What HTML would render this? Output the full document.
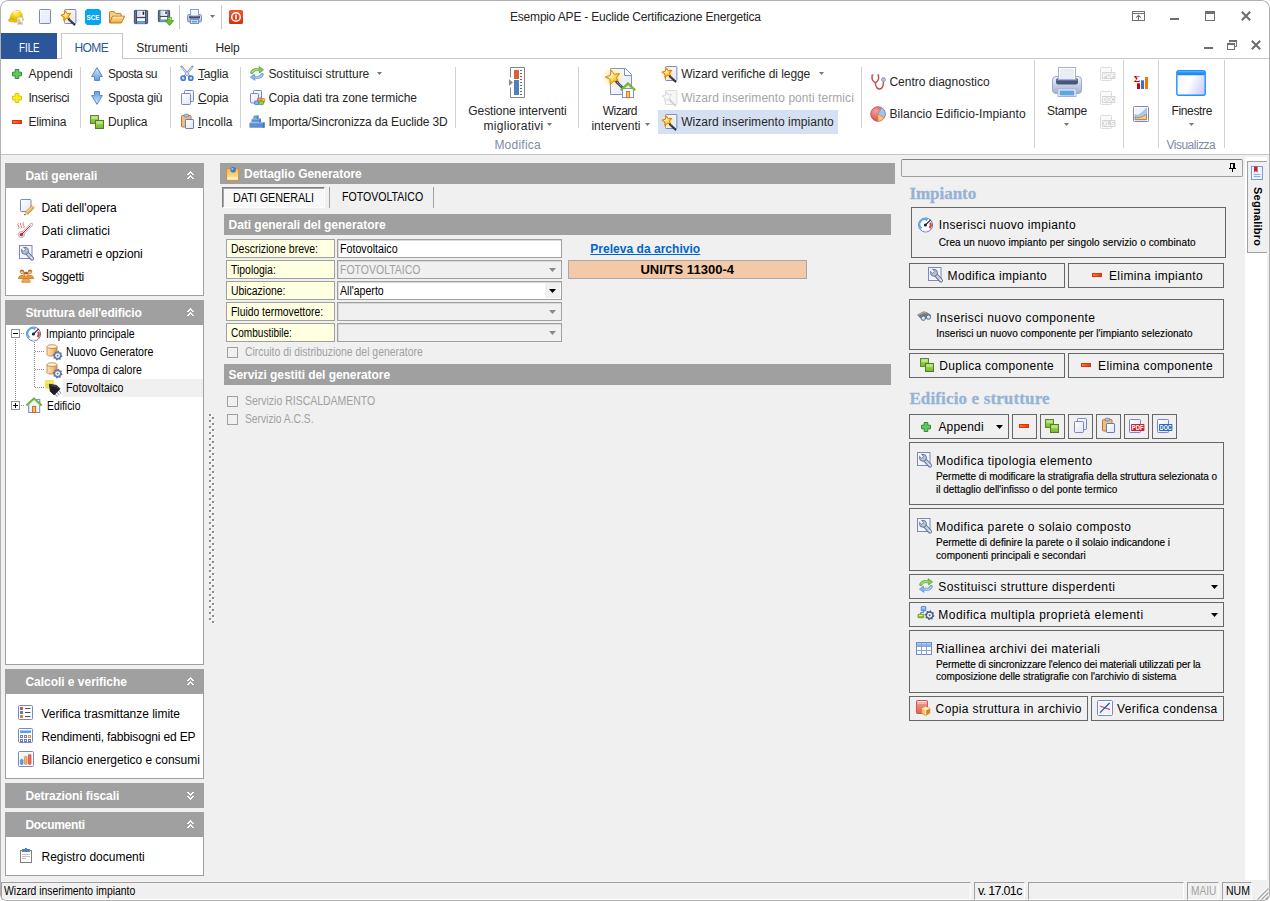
<!DOCTYPE html>
<html lang="it"><head><meta charset="utf-8"><title>Esempio APE - Euclide Certificazione Energetica</title>
<style>
html,body{margin:0;padding:0;}
body{width:1270px;height:901px;overflow:hidden;background:#fff;font-family:'Liberation Sans', sans-serif;font-size:12px;}
#app{position:relative;width:1270px;height:901px;overflow:hidden;background:#fff;border-radius:8px 8px 6px 6px;}
#app div,#app svg{position:absolute;box-sizing:border-box;}
#app svg{overflow:visible;}
.t{white-space:pre;}
u{text-decoration:underline;}
</style></head>
<body><div id="app">
<div style="left:0px;top:0px;width:1270px;height:901px;background:#fff;"></div>
<div style="left:1px;top:155px;width:1268px;height:745px;background:#f0f0f0;"></div>
<div style="left:1px;top:154px;width:1268px;height:1px;background:#c6c6c6;"></div>
<div class="t" style="letter-spacing:-0.199px;left:510px;top:9px;height:16px;line-height:16px;font-size:12px;color:#262626;white-space:pre;">Esempio APE - Euclide Certificazione Energetica</div>
<div style="left:179px;top:5px;width:1px;height:24px;background:#c8c8c8;"></div>
<div style="left:221px;top:5px;width:1px;height:24px;background:#c8c8c8;"></div>
<div style="left:1px;top:33px;width:56px;height:26px;background:#2b579a;"></div>
<div class="t" style="transform-origin:0 50%;transform:scaleX(0.8089);left:18.5px;top:40px;height:16px;line-height:16px;font-size:12px;color:#fff;white-space:pre;">FILE</div>
<div style="left:57px;top:58px;width:1212px;height:1px;background:#c6c6c6;"></div>
<div style="left:61px;top:33px;width:62px;height:26px;background:#fff;border:1px solid #c6c6c6;border-bottom:none;"></div>
<div class="t" style="letter-spacing:-0.600px;left:74.5px;top:40px;height:16px;line-height:16px;font-size:12px;color:#2b579a;white-space:pre;">HOME</div>
<div class="t" style="letter-spacing:0.005px;left:136.2px;top:40px;height:16px;line-height:16px;font-size:12px;color:#262626;white-space:pre;">Strumenti</div>
<div class="t" style="letter-spacing:-0.163px;left:215.4px;top:40px;height:16px;line-height:16px;font-size:12px;color:#262626;white-space:pre;">Help</div>
<div class="t" style="letter-spacing:0.059px;left:28.4px;top:66px;height:16px;line-height:16px;font-size:12px;color:#262626;white-space:pre;">Appendi</div>
<div class="t" style="letter-spacing:-0.364px;left:28.4px;top:90px;height:16px;line-height:16px;font-size:12px;color:#262626;white-space:pre;">Inserisci</div>
<div class="t" style="letter-spacing:-0.210px;left:28.4px;top:114px;height:16px;line-height:16px;font-size:12px;color:#262626;white-space:pre;">Elimina</div>
<div style="left:80px;top:67px;width:1px;height:61px;background:#d2d2d2;"></div>
<div class="t" style="letter-spacing:-0.484px;left:108px;top:66px;height:16px;line-height:16px;font-size:12px;color:#262626;white-space:pre;">Sposta su</div>
<div class="t" style="letter-spacing:-0.247px;left:108px;top:90px;height:16px;line-height:16px;font-size:12px;color:#262626;white-space:pre;">Sposta giù</div>
<div class="t" style="letter-spacing:-0.089px;left:108px;top:114px;height:16px;line-height:16px;font-size:12px;color:#262626;white-space:pre;">Duplica</div>
<div style="left:170px;top:67px;width:1px;height:61px;background:#d2d2d2;"></div>
<div class="t" style="letter-spacing:-0.172px;left:198px;top:66px;height:16px;line-height:16px;font-size:12px;color:#262626;white-space:pre;"><u>T</u>aglia</div>
<div class="t" style="letter-spacing:-0.215px;left:198px;top:90px;height:16px;line-height:16px;font-size:12px;color:#262626;white-space:pre;"><u>C</u>opia</div>
<div class="t" style="letter-spacing:-0.034px;left:198px;top:114px;height:16px;line-height:16px;font-size:12px;color:#262626;white-space:pre;"><u>I</u>ncolla</div>
<div style="left:240px;top:67px;width:1px;height:61px;background:#d2d2d2;"></div>
<div class="t" style="letter-spacing:-0.024px;left:268.4px;top:66px;height:16px;line-height:16px;font-size:12px;color:#262626;white-space:pre;">Sostituisci strutture</div>
<div class="t" style="letter-spacing:-0.055px;left:268.4px;top:90px;height:16px;line-height:16px;font-size:12px;color:#262626;white-space:pre;">Copia dati tra zone termiche</div>
<div class="t" style="letter-spacing:-0.147px;left:268.4px;top:114px;height:16px;line-height:16px;font-size:12px;color:#262626;white-space:pre;">Importa/Sincronizza da Euclide 3D</div>
<div style="left:455px;top:67px;width:1px;height:61px;background:#d2d2d2;"></div>
<div class="t" style="letter-spacing:-0.087px;left:468.3px;top:103px;height:16px;line-height:16px;font-size:12px;color:#262626;white-space:pre;">Gestione interventi</div>
<div class="t" style="letter-spacing:0.265px;left:483.6px;top:118px;height:16px;line-height:16px;font-size:12px;color:#262626;white-space:pre;">migliorativi</div>
<div class="t" style="letter-spacing:0.230px;left:494.4px;top:137px;height:16px;line-height:16px;font-size:12px;color:#808b9f;white-space:pre;">Modifica</div>
<div style="left:578px;top:67px;width:1px;height:61px;background:#d2d2d2;"></div>
<div class="t" style="letter-spacing:-0.509px;left:602.7px;top:103px;height:16px;line-height:16px;font-size:12px;color:#262626;white-space:pre;">Wizard</div>
<div class="t" style="letter-spacing:0.044px;left:591.4px;top:118px;height:16px;line-height:16px;font-size:12px;color:#262626;white-space:pre;">interventi</div>
<div style="left:658px;top:110px;width:180px;height:24px;background:#d5e1f2;"></div>
<div class="t" style="letter-spacing:-0.068px;left:681.2px;top:66px;height:16px;line-height:16px;font-size:12px;color:#262626;white-space:pre;">Wizard verifiche di legge</div>
<div class="t" style="letter-spacing:0.061px;left:681.2px;top:90px;height:16px;line-height:16px;font-size:12px;color:#a6a6a6;white-space:pre;">Wizard inserimento ponti termici</div>
<div class="t" style="letter-spacing:0.043px;left:681.2px;top:114px;height:16px;line-height:16px;font-size:12px;color:#262626;white-space:pre;">Wizard inserimento impianto</div>
<div style="left:861px;top:67px;width:1px;height:61px;background:#d2d2d2;"></div>
<div class="t" style="letter-spacing:0.008px;left:889.4px;top:74px;height:16px;line-height:16px;font-size:12px;color:#262626;white-space:pre;">Centro diagnostico</div>
<div class="t" style="letter-spacing:0.090px;left:889.4px;top:106px;height:16px;line-height:16px;font-size:12px;color:#262626;white-space:pre;">Bilancio Edificio-Impianto</div>
<div style="left:1034px;top:60px;width:1px;height:88px;background:#d2d2d2;"></div>
<div class="t" style="letter-spacing:-0.232px;left:1046.9px;top:103px;height:16px;line-height:16px;font-size:12px;color:#262626;white-space:pre;">Stampe</div>
<div style="left:1123px;top:60px;width:1px;height:88px;background:#d2d2d2;"></div>
<div style="left:1158px;top:60px;width:1px;height:88px;background:#d2d2d2;"></div>
<div class="t" style="letter-spacing:-0.337px;left:1171.4px;top:103px;height:16px;line-height:16px;font-size:12px;color:#262626;white-space:pre;">Finestre</div>
<div class="t" style="letter-spacing:-0.501px;left:1166.5px;top:137px;height:16px;line-height:16px;font-size:12px;color:#808b9f;white-space:pre;">Visualizza</div>
<div style="left:1224px;top:60px;width:1px;height:88px;background:#d2d2d2;"></div>
<svg style="left:377.0px;top:72.0px;" width="5" height="3" viewBox="0 0 5 3"><path d="M0 0H5L2.5 3Z" fill="#777"/></svg>
<svg style="left:547.0px;top:123.0px;" width="5" height="3" viewBox="0 0 5 3"><path d="M0 0H5L2.5 3Z" fill="#777"/></svg>
<svg style="left:645.0px;top:123.0px;" width="5" height="3" viewBox="0 0 5 3"><path d="M0 0H5L2.5 3Z" fill="#777"/></svg>
<svg style="left:818.5px;top:72.0px;" width="5" height="3" viewBox="0 0 5 3"><path d="M0 0H5L2.5 3Z" fill="#777"/></svg>
<svg style="left:1064.0px;top:123.0px;" width="5" height="3" viewBox="0 0 5 3"><path d="M0 0H5L2.5 3Z" fill="#777"/></svg>
<svg style="left:1189.0px;top:123.0px;" width="5" height="3" viewBox="0 0 5 3"><path d="M0 0H5L2.5 3Z" fill="#777"/></svg>
<svg style="left:210.0px;top:15.0px;" width="5" height="3" viewBox="0 0 5 3"><path d="M0 0H5L2.5 3Z" fill="#777"/></svg>
<div style="left:5px;top:163px;width:199px;height:25px;background:#a0a0a0;"></div>
<div class="t" style="letter-spacing:-0.011px;left:25.4px;top:168px;height:16px;line-height:16px;font-size:12px;color:#fff;white-space:pre;font-weight:700;">Dati generali</div>
<svg style="left:187px;top:171px;shape-rendering:crispEdges;" width="7" height="8" viewBox="0 0 7 8"><rect x="3" y="0" width="1" height="1" fill="#fff"/><rect x="2" y="1" width="3" height="1" fill="#fff"/><rect x="1" y="2" width="2" height="1" fill="#fff"/><rect x="4" y="2" width="2" height="1" fill="#fff"/><rect x="0" y="3" width="2" height="1" fill="#fff"/><rect x="5" y="3" width="2" height="1" fill="#fff"/><rect x="3" y="4" width="1" height="1" fill="#fff"/><rect x="2" y="5" width="3" height="1" fill="#fff"/><rect x="1" y="6" width="2" height="1" fill="#fff"/><rect x="4" y="6" width="2" height="1" fill="#fff"/><rect x="0" y="7" width="2" height="1" fill="#fff"/><rect x="5" y="7" width="2" height="1" fill="#fff"/></svg>
<div style="left:5px;top:188px;width:199px;height:108px;background:#fff;border:1px solid #a0a0a0;border-top:none;"></div>
<div style="left:5px;top:300px;width:199px;height:25px;background:#a0a0a0;"></div>
<div class="t" style="letter-spacing:-0.138px;left:25.4px;top:305px;height:16px;line-height:16px;font-size:12px;color:#fff;white-space:pre;font-weight:700;">Struttura dell'edificio</div>
<svg style="left:187px;top:308px;shape-rendering:crispEdges;" width="7" height="8" viewBox="0 0 7 8"><rect x="3" y="0" width="1" height="1" fill="#fff"/><rect x="2" y="1" width="3" height="1" fill="#fff"/><rect x="1" y="2" width="2" height="1" fill="#fff"/><rect x="4" y="2" width="2" height="1" fill="#fff"/><rect x="0" y="3" width="2" height="1" fill="#fff"/><rect x="5" y="3" width="2" height="1" fill="#fff"/><rect x="3" y="4" width="1" height="1" fill="#fff"/><rect x="2" y="5" width="3" height="1" fill="#fff"/><rect x="1" y="6" width="2" height="1" fill="#fff"/><rect x="4" y="6" width="2" height="1" fill="#fff"/><rect x="0" y="7" width="2" height="1" fill="#fff"/><rect x="5" y="7" width="2" height="1" fill="#fff"/></svg>
<div style="left:5px;top:325px;width:199px;height:340px;background:#fff;border:1px solid #a0a0a0;border-top:none;"></div>
<div style="left:5px;top:669px;width:199px;height:25px;background:#a0a0a0;"></div>
<div class="t" style="letter-spacing:-0.025px;left:25.4px;top:674px;height:16px;line-height:16px;font-size:12px;color:#fff;white-space:pre;font-weight:700;">Calcoli e verifiche</div>
<svg style="left:187px;top:677px;shape-rendering:crispEdges;" width="7" height="8" viewBox="0 0 7 8"><rect x="3" y="0" width="1" height="1" fill="#fff"/><rect x="2" y="1" width="3" height="1" fill="#fff"/><rect x="1" y="2" width="2" height="1" fill="#fff"/><rect x="4" y="2" width="2" height="1" fill="#fff"/><rect x="0" y="3" width="2" height="1" fill="#fff"/><rect x="5" y="3" width="2" height="1" fill="#fff"/><rect x="3" y="4" width="1" height="1" fill="#fff"/><rect x="2" y="5" width="3" height="1" fill="#fff"/><rect x="1" y="6" width="2" height="1" fill="#fff"/><rect x="4" y="6" width="2" height="1" fill="#fff"/><rect x="0" y="7" width="2" height="1" fill="#fff"/><rect x="5" y="7" width="2" height="1" fill="#fff"/></svg>
<div style="left:5px;top:694px;width:199px;height:85px;background:#fff;border:1px solid #a0a0a0;border-top:none;"></div>
<div style="left:5px;top:783px;width:199px;height:25px;background:#a0a0a0;"></div>
<div class="t" style="letter-spacing:-0.087px;left:25.4px;top:788px;height:16px;line-height:16px;font-size:12px;color:#fff;white-space:pre;font-weight:700;">Detrazioni fiscali</div>
<svg style="left:187px;top:792px;shape-rendering:crispEdges;" width="7" height="8" viewBox="0 0 7 8"><rect x="3" y="3" width="1" height="1" fill="#fff"/><rect x="2" y="2" width="3" height="1" fill="#fff"/><rect x="1" y="1" width="2" height="1" fill="#fff"/><rect x="4" y="1" width="2" height="1" fill="#fff"/><rect x="0" y="0" width="2" height="1" fill="#fff"/><rect x="5" y="0" width="2" height="1" fill="#fff"/><rect x="3" y="7" width="1" height="1" fill="#fff"/><rect x="2" y="6" width="3" height="1" fill="#fff"/><rect x="1" y="5" width="2" height="1" fill="#fff"/><rect x="4" y="5" width="2" height="1" fill="#fff"/><rect x="0" y="4" width="2" height="1" fill="#fff"/><rect x="5" y="4" width="2" height="1" fill="#fff"/></svg>
<div style="left:5px;top:812px;width:199px;height:25px;background:#a0a0a0;"></div>
<div class="t" style="letter-spacing:-0.302px;left:25.4px;top:817px;height:16px;line-height:16px;font-size:12px;color:#fff;white-space:pre;font-weight:700;">Documenti</div>
<svg style="left:187px;top:820px;shape-rendering:crispEdges;" width="7" height="8" viewBox="0 0 7 8"><rect x="3" y="0" width="1" height="1" fill="#fff"/><rect x="2" y="1" width="3" height="1" fill="#fff"/><rect x="1" y="2" width="2" height="1" fill="#fff"/><rect x="4" y="2" width="2" height="1" fill="#fff"/><rect x="0" y="3" width="2" height="1" fill="#fff"/><rect x="5" y="3" width="2" height="1" fill="#fff"/><rect x="3" y="4" width="1" height="1" fill="#fff"/><rect x="2" y="5" width="3" height="1" fill="#fff"/><rect x="1" y="6" width="2" height="1" fill="#fff"/><rect x="4" y="6" width="2" height="1" fill="#fff"/><rect x="0" y="7" width="2" height="1" fill="#fff"/><rect x="5" y="7" width="2" height="1" fill="#fff"/></svg>
<div style="left:5px;top:837px;width:199px;height:39px;background:#fff;border:1px solid #a0a0a0;border-top:none;"></div>
<div class="t" style="letter-spacing:-0.075px;left:41.5px;top:200px;height:16px;line-height:16px;font-size:12px;color:#000;white-space:pre;">Dati dell'opera</div>
<div class="t" style="letter-spacing:0.089px;left:41.5px;top:223px;height:16px;line-height:16px;font-size:12px;color:#000;white-space:pre;">Dati climatici</div>
<div class="t" style="letter-spacing:-0.122px;left:41.5px;top:246px;height:16px;line-height:16px;font-size:12px;color:#000;white-space:pre;">Parametri e opzioni</div>
<div class="t" style="letter-spacing:-0.178px;left:41.5px;top:269px;height:16px;line-height:16px;font-size:12px;color:#000;white-space:pre;">Soggetti</div>
<div class="t" style="letter-spacing:-0.033px;left:41.5px;top:706px;height:16px;line-height:16px;font-size:12px;color:#000;white-space:pre;">Verifica trasmittanze limite</div>
<div class="t" style="letter-spacing:-0.152px;left:41.5px;top:729px;height:16px;line-height:16px;font-size:12px;color:#000;white-space:pre;">Rendimenti, fabbisogni ed EP</div>
<div class="t" style="letter-spacing:-0.040px;left:41.5px;top:752px;height:16px;line-height:16px;font-size:12px;color:#000;white-space:pre;">Bilancio energetico e consumi</div>
<div class="t" style="letter-spacing:-0.011px;left:41.5px;top:849px;height:16px;line-height:16px;font-size:12px;color:#000;white-space:pre;">Registro documenti</div>
<div style="left:63px;top:379px;width:140px;height:18px;background:#f0f0f0;"></div>
<div class="t" style="transform-origin:0 50%;transform:scaleX(0.8444);left:46px;top:326px;height:16.5px;line-height:16.5px;font-size:12.5px;color:#000;white-space:pre;">Impianto principale</div>
<div class="t" style="transform-origin:0 50%;transform:scaleX(0.8508);left:65.7px;top:344px;height:16.5px;line-height:16.5px;font-size:12.5px;color:#000;white-space:pre;">Nuovo Generatore</div>
<div class="t" style="transform-origin:0 50%;transform:scaleX(0.8381);left:65.7px;top:362px;height:16.5px;line-height:16.5px;font-size:12.5px;color:#000;white-space:pre;">Pompa di calore</div>
<div class="t" style="transform-origin:0 50%;transform:scaleX(0.8530);left:65.7px;top:380px;height:16.5px;line-height:16.5px;font-size:12.5px;color:#000;white-space:pre;">Fotovoltaico</div>
<div class="t" style="transform-origin:0 50%;transform:scaleX(0.8288);left:46.6px;top:398px;height:16.5px;line-height:16.5px;font-size:12.5px;color:#000;white-space:pre;">Edificio</div>
<svg style="left:0px;top:0px;" width="64" height="420" viewBox="0 0 64 420"><rect x="15" y="339" width="1" height="1" fill="#8a8a8a"/><rect x="15" y="341" width="1" height="1" fill="#8a8a8a"/><rect x="15" y="343" width="1" height="1" fill="#8a8a8a"/><rect x="15" y="345" width="1" height="1" fill="#8a8a8a"/><rect x="15" y="347" width="1" height="1" fill="#8a8a8a"/><rect x="15" y="349" width="1" height="1" fill="#8a8a8a"/><rect x="15" y="351" width="1" height="1" fill="#8a8a8a"/><rect x="15" y="353" width="1" height="1" fill="#8a8a8a"/><rect x="15" y="355" width="1" height="1" fill="#8a8a8a"/><rect x="15" y="357" width="1" height="1" fill="#8a8a8a"/><rect x="15" y="359" width="1" height="1" fill="#8a8a8a"/><rect x="15" y="361" width="1" height="1" fill="#8a8a8a"/><rect x="15" y="363" width="1" height="1" fill="#8a8a8a"/><rect x="15" y="365" width="1" height="1" fill="#8a8a8a"/><rect x="15" y="367" width="1" height="1" fill="#8a8a8a"/><rect x="15" y="369" width="1" height="1" fill="#8a8a8a"/><rect x="15" y="371" width="1" height="1" fill="#8a8a8a"/><rect x="15" y="373" width="1" height="1" fill="#8a8a8a"/><rect x="15" y="375" width="1" height="1" fill="#8a8a8a"/><rect x="15" y="377" width="1" height="1" fill="#8a8a8a"/><rect x="15" y="379" width="1" height="1" fill="#8a8a8a"/><rect x="15" y="381" width="1" height="1" fill="#8a8a8a"/><rect x="15" y="383" width="1" height="1" fill="#8a8a8a"/><rect x="15" y="385" width="1" height="1" fill="#8a8a8a"/><rect x="15" y="387" width="1" height="1" fill="#8a8a8a"/><rect x="15" y="389" width="1" height="1" fill="#8a8a8a"/><rect x="15" y="391" width="1" height="1" fill="#8a8a8a"/><rect x="15" y="393" width="1" height="1" fill="#8a8a8a"/><rect x="15" y="395" width="1" height="1" fill="#8a8a8a"/><rect x="15" y="397" width="1" height="1" fill="#8a8a8a"/><rect x="15" y="399" width="1" height="1" fill="#8a8a8a"/><rect x="34" y="342" width="1" height="1" fill="#8a8a8a"/><rect x="34" y="344" width="1" height="1" fill="#8a8a8a"/><rect x="34" y="346" width="1" height="1" fill="#8a8a8a"/><rect x="34" y="348" width="1" height="1" fill="#8a8a8a"/><rect x="34" y="350" width="1" height="1" fill="#8a8a8a"/><rect x="34" y="352" width="1" height="1" fill="#8a8a8a"/><rect x="34" y="354" width="1" height="1" fill="#8a8a8a"/><rect x="34" y="356" width="1" height="1" fill="#8a8a8a"/><rect x="34" y="358" width="1" height="1" fill="#8a8a8a"/><rect x="34" y="360" width="1" height="1" fill="#8a8a8a"/><rect x="34" y="362" width="1" height="1" fill="#8a8a8a"/><rect x="34" y="364" width="1" height="1" fill="#8a8a8a"/><rect x="34" y="366" width="1" height="1" fill="#8a8a8a"/><rect x="34" y="368" width="1" height="1" fill="#8a8a8a"/><rect x="34" y="370" width="1" height="1" fill="#8a8a8a"/><rect x="34" y="372" width="1" height="1" fill="#8a8a8a"/><rect x="34" y="374" width="1" height="1" fill="#8a8a8a"/><rect x="34" y="376" width="1" height="1" fill="#8a8a8a"/><rect x="34" y="378" width="1" height="1" fill="#8a8a8a"/><rect x="34" y="380" width="1" height="1" fill="#8a8a8a"/><rect x="34" y="382" width="1" height="1" fill="#8a8a8a"/><rect x="34" y="384" width="1" height="1" fill="#8a8a8a"/><rect x="34" y="386" width="1" height="1" fill="#8a8a8a"/><rect x="21" y="333" width="1" height="1" fill="#8a8a8a"/><rect x="21" y="405" width="1" height="1" fill="#8a8a8a"/><rect x="23" y="333" width="1" height="1" fill="#8a8a8a"/><rect x="23" y="405" width="1" height="1" fill="#8a8a8a"/><rect x="35" y="351" width="1" height="1" fill="#8a8a8a"/><rect x="37" y="351" width="1" height="1" fill="#8a8a8a"/><rect x="39" y="351" width="1" height="1" fill="#8a8a8a"/><rect x="41" y="351" width="1" height="1" fill="#8a8a8a"/><rect x="43" y="351" width="1" height="1" fill="#8a8a8a"/><rect x="35" y="369" width="1" height="1" fill="#8a8a8a"/><rect x="37" y="369" width="1" height="1" fill="#8a8a8a"/><rect x="39" y="369" width="1" height="1" fill="#8a8a8a"/><rect x="41" y="369" width="1" height="1" fill="#8a8a8a"/><rect x="43" y="369" width="1" height="1" fill="#8a8a8a"/><rect x="35" y="387" width="1" height="1" fill="#8a8a8a"/><rect x="37" y="387" width="1" height="1" fill="#8a8a8a"/><rect x="39" y="387" width="1" height="1" fill="#8a8a8a"/><rect x="41" y="387" width="1" height="1" fill="#8a8a8a"/><rect x="43" y="387" width="1" height="1" fill="#8a8a8a"/></svg>
<div style="left:11px;top:329px;width:9px;height:9px;background:#fff;border:1px solid #919191;"></div>
<div style="left:13px;top:333px;width:5px;height:1px;background:#000;"></div>
<div style="left:11px;top:401px;width:9px;height:9px;background:#fff;border:1px solid #919191;"></div>
<div style="left:13px;top:405px;width:5px;height:1px;background:#000;"></div>
<div style="left:15px;top:403px;width:1px;height:5px;background:#000;"></div>
<svg style="left:209px;top:414px;" width="6" height="212" viewBox="0 0 6 212"><rect x="1" y="1" width="2" height="2" fill="#fff"/><rect x="0" y="0" width="2" height="2" fill="#8c8c8c"/><rect x="4" y="4" width="2" height="2" fill="#fff"/><rect x="3" y="3" width="2" height="2" fill="#8c8c8c"/><rect x="1" y="7" width="2" height="2" fill="#fff"/><rect x="0" y="6" width="2" height="2" fill="#8c8c8c"/><rect x="4" y="10" width="2" height="2" fill="#fff"/><rect x="3" y="9" width="2" height="2" fill="#8c8c8c"/><rect x="1" y="13" width="2" height="2" fill="#fff"/><rect x="0" y="12" width="2" height="2" fill="#8c8c8c"/><rect x="4" y="16" width="2" height="2" fill="#fff"/><rect x="3" y="15" width="2" height="2" fill="#8c8c8c"/><rect x="1" y="19" width="2" height="2" fill="#fff"/><rect x="0" y="18" width="2" height="2" fill="#8c8c8c"/><rect x="4" y="22" width="2" height="2" fill="#fff"/><rect x="3" y="21" width="2" height="2" fill="#8c8c8c"/><rect x="1" y="25" width="2" height="2" fill="#fff"/><rect x="0" y="24" width="2" height="2" fill="#8c8c8c"/><rect x="4" y="28" width="2" height="2" fill="#fff"/><rect x="3" y="27" width="2" height="2" fill="#8c8c8c"/><rect x="1" y="31" width="2" height="2" fill="#fff"/><rect x="0" y="30" width="2" height="2" fill="#8c8c8c"/><rect x="4" y="34" width="2" height="2" fill="#fff"/><rect x="3" y="33" width="2" height="2" fill="#8c8c8c"/><rect x="1" y="37" width="2" height="2" fill="#fff"/><rect x="0" y="36" width="2" height="2" fill="#8c8c8c"/><rect x="4" y="40" width="2" height="2" fill="#fff"/><rect x="3" y="39" width="2" height="2" fill="#8c8c8c"/><rect x="1" y="43" width="2" height="2" fill="#fff"/><rect x="0" y="42" width="2" height="2" fill="#8c8c8c"/><rect x="4" y="46" width="2" height="2" fill="#fff"/><rect x="3" y="45" width="2" height="2" fill="#8c8c8c"/><rect x="1" y="49" width="2" height="2" fill="#fff"/><rect x="0" y="48" width="2" height="2" fill="#8c8c8c"/><rect x="4" y="52" width="2" height="2" fill="#fff"/><rect x="3" y="51" width="2" height="2" fill="#8c8c8c"/><rect x="1" y="55" width="2" height="2" fill="#fff"/><rect x="0" y="54" width="2" height="2" fill="#8c8c8c"/><rect x="4" y="58" width="2" height="2" fill="#fff"/><rect x="3" y="57" width="2" height="2" fill="#8c8c8c"/><rect x="1" y="61" width="2" height="2" fill="#fff"/><rect x="0" y="60" width="2" height="2" fill="#8c8c8c"/><rect x="4" y="64" width="2" height="2" fill="#fff"/><rect x="3" y="63" width="2" height="2" fill="#8c8c8c"/><rect x="1" y="67" width="2" height="2" fill="#fff"/><rect x="0" y="66" width="2" height="2" fill="#8c8c8c"/><rect x="4" y="70" width="2" height="2" fill="#fff"/><rect x="3" y="69" width="2" height="2" fill="#8c8c8c"/><rect x="1" y="73" width="2" height="2" fill="#fff"/><rect x="0" y="72" width="2" height="2" fill="#8c8c8c"/><rect x="4" y="76" width="2" height="2" fill="#fff"/><rect x="3" y="75" width="2" height="2" fill="#8c8c8c"/><rect x="1" y="79" width="2" height="2" fill="#fff"/><rect x="0" y="78" width="2" height="2" fill="#8c8c8c"/><rect x="4" y="82" width="2" height="2" fill="#fff"/><rect x="3" y="81" width="2" height="2" fill="#8c8c8c"/><rect x="1" y="85" width="2" height="2" fill="#fff"/><rect x="0" y="84" width="2" height="2" fill="#8c8c8c"/><rect x="4" y="88" width="2" height="2" fill="#fff"/><rect x="3" y="87" width="2" height="2" fill="#8c8c8c"/><rect x="1" y="91" width="2" height="2" fill="#fff"/><rect x="0" y="90" width="2" height="2" fill="#8c8c8c"/><rect x="4" y="94" width="2" height="2" fill="#fff"/><rect x="3" y="93" width="2" height="2" fill="#8c8c8c"/><rect x="1" y="97" width="2" height="2" fill="#fff"/><rect x="0" y="96" width="2" height="2" fill="#8c8c8c"/><rect x="4" y="100" width="2" height="2" fill="#fff"/><rect x="3" y="99" width="2" height="2" fill="#8c8c8c"/><rect x="1" y="103" width="2" height="2" fill="#fff"/><rect x="0" y="102" width="2" height="2" fill="#8c8c8c"/><rect x="4" y="106" width="2" height="2" fill="#fff"/><rect x="3" y="105" width="2" height="2" fill="#8c8c8c"/><rect x="1" y="109" width="2" height="2" fill="#fff"/><rect x="0" y="108" width="2" height="2" fill="#8c8c8c"/><rect x="4" y="112" width="2" height="2" fill="#fff"/><rect x="3" y="111" width="2" height="2" fill="#8c8c8c"/><rect x="1" y="115" width="2" height="2" fill="#fff"/><rect x="0" y="114" width="2" height="2" fill="#8c8c8c"/><rect x="4" y="118" width="2" height="2" fill="#fff"/><rect x="3" y="117" width="2" height="2" fill="#8c8c8c"/><rect x="1" y="121" width="2" height="2" fill="#fff"/><rect x="0" y="120" width="2" height="2" fill="#8c8c8c"/><rect x="4" y="124" width="2" height="2" fill="#fff"/><rect x="3" y="123" width="2" height="2" fill="#8c8c8c"/><rect x="1" y="127" width="2" height="2" fill="#fff"/><rect x="0" y="126" width="2" height="2" fill="#8c8c8c"/><rect x="4" y="130" width="2" height="2" fill="#fff"/><rect x="3" y="129" width="2" height="2" fill="#8c8c8c"/><rect x="1" y="133" width="2" height="2" fill="#fff"/><rect x="0" y="132" width="2" height="2" fill="#8c8c8c"/><rect x="4" y="136" width="2" height="2" fill="#fff"/><rect x="3" y="135" width="2" height="2" fill="#8c8c8c"/><rect x="1" y="139" width="2" height="2" fill="#fff"/><rect x="0" y="138" width="2" height="2" fill="#8c8c8c"/><rect x="4" y="142" width="2" height="2" fill="#fff"/><rect x="3" y="141" width="2" height="2" fill="#8c8c8c"/><rect x="1" y="145" width="2" height="2" fill="#fff"/><rect x="0" y="144" width="2" height="2" fill="#8c8c8c"/><rect x="4" y="148" width="2" height="2" fill="#fff"/><rect x="3" y="147" width="2" height="2" fill="#8c8c8c"/><rect x="1" y="151" width="2" height="2" fill="#fff"/><rect x="0" y="150" width="2" height="2" fill="#8c8c8c"/><rect x="4" y="154" width="2" height="2" fill="#fff"/><rect x="3" y="153" width="2" height="2" fill="#8c8c8c"/><rect x="1" y="157" width="2" height="2" fill="#fff"/><rect x="0" y="156" width="2" height="2" fill="#8c8c8c"/><rect x="4" y="160" width="2" height="2" fill="#fff"/><rect x="3" y="159" width="2" height="2" fill="#8c8c8c"/><rect x="1" y="163" width="2" height="2" fill="#fff"/><rect x="0" y="162" width="2" height="2" fill="#8c8c8c"/><rect x="4" y="166" width="2" height="2" fill="#fff"/><rect x="3" y="165" width="2" height="2" fill="#8c8c8c"/><rect x="1" y="169" width="2" height="2" fill="#fff"/><rect x="0" y="168" width="2" height="2" fill="#8c8c8c"/><rect x="4" y="172" width="2" height="2" fill="#fff"/><rect x="3" y="171" width="2" height="2" fill="#8c8c8c"/><rect x="1" y="175" width="2" height="2" fill="#fff"/><rect x="0" y="174" width="2" height="2" fill="#8c8c8c"/><rect x="4" y="178" width="2" height="2" fill="#fff"/><rect x="3" y="177" width="2" height="2" fill="#8c8c8c"/><rect x="1" y="181" width="2" height="2" fill="#fff"/><rect x="0" y="180" width="2" height="2" fill="#8c8c8c"/><rect x="4" y="184" width="2" height="2" fill="#fff"/><rect x="3" y="183" width="2" height="2" fill="#8c8c8c"/><rect x="1" y="187" width="2" height="2" fill="#fff"/><rect x="0" y="186" width="2" height="2" fill="#8c8c8c"/><rect x="4" y="190" width="2" height="2" fill="#fff"/><rect x="3" y="189" width="2" height="2" fill="#8c8c8c"/><rect x="1" y="193" width="2" height="2" fill="#fff"/><rect x="0" y="192" width="2" height="2" fill="#8c8c8c"/><rect x="4" y="196" width="2" height="2" fill="#fff"/><rect x="3" y="195" width="2" height="2" fill="#8c8c8c"/><rect x="1" y="199" width="2" height="2" fill="#fff"/><rect x="0" y="198" width="2" height="2" fill="#8c8c8c"/><rect x="4" y="202" width="2" height="2" fill="#fff"/><rect x="3" y="201" width="2" height="2" fill="#8c8c8c"/><rect x="1" y="205" width="2" height="2" fill="#fff"/><rect x="0" y="204" width="2" height="2" fill="#8c8c8c"/><rect x="4" y="208" width="2" height="2" fill="#fff"/><rect x="3" y="207" width="2" height="2" fill="#8c8c8c"/></svg>
<div style="left:220px;top:163px;width:675px;height:21px;background:#a0a0a0;"></div>
<div class="t" style="letter-spacing:-0.058px;left:244.1px;top:166px;height:16px;line-height:16px;font-size:12px;color:#fff;white-space:pre;font-weight:700;">Dettaglio Generatore</div>
<div style="left:222px;top:187px;width:103px;height:21px;background:#f8f8f8;border:1px solid #808080;border-right-color:#fff;border-bottom-color:#fff;box-shadow:inset 1px 1px 0 #a4a4a4;"></div>
<div class="t" style="transform-origin:0 50%;transform:scaleX(0.8606);left:232.5px;top:190px;height:16.5px;line-height:16.5px;font-size:12.5px;color:#000;white-space:pre;">DATI GENERALI</div>
<div style="left:329px;top:187px;width:1px;height:21px;background:#a0a0a0;"></div>
<div class="t" style="transform-origin:0 50%;transform:scaleX(0.8462);left:341.6px;top:189px;height:16.5px;line-height:16.5px;font-size:12.5px;color:#000;white-space:pre;">FOTOVOLTAICO</div>
<div style="left:433px;top:187px;width:1px;height:21px;background:#a0a0a0;"></div>
<div style="left:224px;top:214px;width:667px;height:21px;background:#a0a0a0;"></div>
<div class="t" style="letter-spacing:-0.028px;left:228.5px;top:217px;height:16px;line-height:16px;font-size:12px;color:#fff;white-space:pre;font-weight:700;">Dati generali del generatore</div>
<div style="left:224px;top:364px;width:667px;height:21px;background:#a0a0a0;"></div>
<div class="t" style="letter-spacing:-0.062px;left:228.5px;top:367px;height:16px;line-height:16px;font-size:12px;color:#fff;white-space:pre;font-weight:700;">Servizi gestiti del generatore</div>
<div style="left:226px;top:239px;width:109px;height:19px;background:#ffffe1;border:1px solid #a0a0a0;"></div>
<div class="t" style="transform-origin:0 50%;transform:scaleX(0.8404);left:230.6px;top:241px;height:16.5px;line-height:16.5px;font-size:12.5px;color:#000;white-space:pre;">Descrizione breve:</div>
<div style="left:337px;top:239px;width:225px;height:19px;background:#fff;border:1px solid #a0a0a0;box-shadow:inset 1px 1px 0 #d9d9d9;"></div>
<div style="left:226px;top:260px;width:109px;height:19px;background:#ffffe1;border:1px solid #a0a0a0;"></div>
<div class="t" style="transform-origin:0 50%;transform:scaleX(0.8335);left:230.6px;top:262px;height:16.5px;line-height:16.5px;font-size:12.5px;color:#000;white-space:pre;">Tipologia:</div>
<div style="left:337px;top:260px;width:225px;height:19px;background:#f0f0f0;border:1px solid #a0a0a0;box-shadow:inset 1px 1px 0 #d9d9d9;"></div>
<svg style="left:549.0px;top:268.0px;" width="7" height="4" viewBox="0 0 7 4"><path d="M0 0H7L3.5 4Z" fill="#8a8a8a"/></svg>
<div style="left:226px;top:281px;width:109px;height:19px;background:#ffffe1;border:1px solid #a0a0a0;"></div>
<div class="t" style="transform-origin:0 50%;transform:scaleX(0.8327);left:230.6px;top:283px;height:16.5px;line-height:16.5px;font-size:12.5px;color:#000;white-space:pre;">Ubicazione:</div>
<div style="left:337px;top:281px;width:225px;height:19px;background:#fff;border:1px solid #a0a0a0;box-shadow:inset 1px 1px 0 #d9d9d9;"></div>
<div style="left:545px;top:283px;width:15px;height:15px;background:#f0f0f0;"></div>
<svg style="left:549.0px;top:289.0px;" width="7" height="4" viewBox="0 0 7 4"><path d="M0 0H7L3.5 4Z" fill="#000"/></svg>
<div style="left:226px;top:302px;width:109px;height:19px;background:#ffffe1;border:1px solid #a0a0a0;"></div>
<div class="t" style="transform-origin:0 50%;transform:scaleX(0.8284);left:230.6px;top:304px;height:16.5px;line-height:16.5px;font-size:12.5px;color:#000;white-space:pre;">Fluido termovettore:</div>
<div style="left:337px;top:302px;width:225px;height:19px;background:#f0f0f0;border:1px solid #a0a0a0;box-shadow:inset 1px 1px 0 #d9d9d9;"></div>
<svg style="left:549.0px;top:310.0px;" width="7" height="4" viewBox="0 0 7 4"><path d="M0 0H7L3.5 4Z" fill="#8a8a8a"/></svg>
<div style="left:226px;top:323px;width:109px;height:19px;background:#ffffe1;border:1px solid #a0a0a0;"></div>
<div class="t" style="transform-origin:0 50%;transform:scaleX(0.8041);left:230.6px;top:325px;height:16.5px;line-height:16.5px;font-size:12.5px;color:#000;white-space:pre;">Combustibile:</div>
<div style="left:337px;top:323px;width:225px;height:19px;background:#f0f0f0;border:1px solid #a0a0a0;box-shadow:inset 1px 1px 0 #d9d9d9;"></div>
<svg style="left:549.0px;top:331.0px;" width="7" height="4" viewBox="0 0 7 4"><path d="M0 0H7L3.5 4Z" fill="#8a8a8a"/></svg>
<div class="t" style="transform-origin:0 50%;transform:scaleX(0.8545);left:339.7px;top:241px;height:16.5px;line-height:16.5px;font-size:12.5px;color:#000;white-space:pre;">Fotovoltaico</div>
<div class="t" style="transform-origin:0 50%;transform:scaleX(0.8399);left:339.7px;top:262px;height:16.5px;line-height:16.5px;font-size:12.5px;color:#a0a0a0;white-space:pre;">FOTOVOLTAICO</div>
<div class="t" style="transform-origin:0 50%;transform:scaleX(0.8447);left:339.7px;top:283px;height:16.5px;line-height:16.5px;font-size:12.5px;color:#000;white-space:pre;">All'aperto</div>
<div class="t" style="letter-spacing:0.027px;left:590.3px;top:241px;height:16px;line-height:16px;font-size:12px;color:#0066cc;white-space:pre;font-weight:700;text-decoration:underline;">Preleva da archivio</div>
<div style="left:568px;top:260px;width:239px;height:19px;background:#f4c9a8;border:1px solid #a8a8a8;"></div>
<div class="t" style="letter-spacing:0.037px;left:640.4px;top:261px;height:17px;line-height:17px;font-size:13px;color:#000;white-space:pre;font-weight:700;">UNI/TS 11300-4</div>
<div style="left:227px;top:347px;width:11px;height:11px;background:#f0f0f0;border:1px solid #a0a0a0;"></div>
<div class="t" style="transform-origin:0 50%;transform:scaleX(0.8331);left:244.8px;top:344px;height:16.5px;line-height:16.5px;font-size:12.5px;color:#a0a0a0;white-space:pre;">Circuito di distribuzione del generatore</div>
<div style="left:227px;top:396px;width:11px;height:11px;background:#f0f0f0;border:1px solid #a0a0a0;"></div>
<div class="t" style="transform-origin:0 50%;transform:scaleX(0.8381);left:244.8px;top:393px;height:16.5px;line-height:16.5px;font-size:12.5px;color:#a0a0a0;white-space:pre;">Servizio RISCALDAMENTO</div>
<div style="left:227px;top:414px;width:11px;height:11px;background:#f0f0f0;border:1px solid #a0a0a0;"></div>
<div class="t" style="transform-origin:0 50%;transform:scaleX(0.8216);left:244.8px;top:411px;height:16.5px;line-height:16.5px;font-size:12.5px;color:#a0a0a0;white-space:pre;">Servizio A.C.S.</div>
<div style="left:1245px;top:157px;width:22px;height:723px;background:#fff;"></div>
<div style="left:901px;top:159px;width:342px;height:18px;background:#f0f0f0;border:1px solid #a0a0a0;border-top-color:#808080;border-radius:2px;"></div>
<div class="t" style="letter-spacing:-0.040px;left:909.4px;top:183px;height:22px;line-height:22px;font-size:17px;color:#95b3d7;white-space:pre;font-weight:700;font-family:'Liberation Serif', serif;-webkit-text-stroke:0.3px #95b3d7;">Impianto</div>
<div class="t" style="letter-spacing:0.139px;left:909.4px;top:388px;height:22px;line-height:22px;font-size:17px;color:#95b3d7;white-space:pre;font-weight:700;font-family:'Liberation Serif', serif;-webkit-text-stroke:0.3px #95b3d7;">Edificio e strutture</div>
<div style="left:911px;top:207px;width:315px;height:51px;background:#f0f0f0;border:1px solid #666;"></div>
<div class="t" style="letter-spacing:0.359px;left:938.7px;top:217px;height:16px;line-height:16px;font-size:12px;color:#000;white-space:pre;">Inserisci nuovo impianto</div>
<div class="t" style="letter-spacing:0.094px;left:938.7px;top:237px;height:12px;line-height:12px;font-size:10px;color:#000;white-space:pre;-webkit-text-stroke:0.15px #000;">Crea un nuovo impianto per singolo servizio o combinato</div>
<div style="left:909px;top:263px;width:156px;height:25px;background:#f0f0f0;border:1px solid #666;"></div>
<div class="t" style="letter-spacing:0.364px;left:947.6px;top:268px;height:16px;line-height:16px;font-size:12px;color:#000;white-space:pre;">Modifica impianto</div>
<div style="left:1068px;top:263px;width:156px;height:25px;background:#f0f0f0;border:1px solid #666;"></div>
<div class="t" style="letter-spacing:0.370px;left:1109px;top:268px;height:16px;line-height:16px;font-size:12px;color:#000;white-space:pre;">Elimina impianto</div>
<div style="left:909px;top:299px;width:315px;height:51px;background:#f0f0f0;border:1px solid #666;"></div>
<div class="t" style="letter-spacing:0.367px;left:936.3px;top:310px;height:16px;line-height:16px;font-size:12px;color:#000;white-space:pre;">Inserisci nuovo componente</div>
<div class="t" style="letter-spacing:0.047px;left:936.3px;top:328px;height:12px;line-height:12px;font-size:10px;color:#000;white-space:pre;-webkit-text-stroke:0.15px #000;">Inserisci un nuovo componente per l'impianto selezionato</div>
<div style="left:909px;top:353px;width:156px;height:25px;background:#f0f0f0;border:1px solid #666;"></div>
<div class="t" style="letter-spacing:0.300px;left:939.3px;top:358px;height:16px;line-height:16px;font-size:12px;color:#000;white-space:pre;">Duplica componente</div>
<div style="left:1068px;top:353px;width:156px;height:25px;background:#f0f0f0;border:1px solid #666;"></div>
<div class="t" style="letter-spacing:0.345px;left:1098.1px;top:358px;height:16px;line-height:16px;font-size:12px;color:#000;white-space:pre;">Elimina componente</div>
<div style="left:909px;top:414px;width:100px;height:25px;background:#f0f0f0;border:1px solid #666;"></div>
<div class="t" style="letter-spacing:0.192px;left:938.4px;top:419px;height:16px;line-height:16px;font-size:12px;color:#000;white-space:pre;">Appendi</div>
<svg style="left:996.0px;top:425.0px;" width="7" height="4" viewBox="0 0 7 4"><path d="M0 0H7L3.5 4Z" fill="#000"/></svg>
<div style="left:1012px;top:414px;width:25px;height:25px;background:#f0f0f0;border:1px solid #666;"></div>
<div style="left:1040px;top:414px;width:25px;height:25px;background:#f0f0f0;border:1px solid #666;"></div>
<div style="left:1068px;top:414px;width:25px;height:25px;background:#f0f0f0;border:1px solid #666;"></div>
<div style="left:1096px;top:414px;width:25px;height:25px;background:#f0f0f0;border:1px solid #666;"></div>
<div style="left:1124px;top:414px;width:25px;height:25px;background:#f0f0f0;border:1px solid #666;"></div>
<div style="left:1152px;top:414px;width:25px;height:25px;background:#f0f0f0;border:1px solid #666;"></div>
<div style="left:909px;top:442px;width:315px;height:63px;background:#f0f0f0;border:1px solid #666;"></div>
<div class="t" style="letter-spacing:0.411px;left:936px;top:453px;height:16px;line-height:16px;font-size:12px;color:#000;white-space:pre;">Modifica tipologia elemento</div>
<div class="t" style="letter-spacing:-0.062px;left:936px;top:471px;height:12px;line-height:12px;font-size:10px;color:#000;white-space:pre;-webkit-text-stroke:0.15px #000;">Permette di modificare la stratigrafia della struttura selezionata o</div>
<div class="t" style="letter-spacing:-0.002px;left:936px;top:484px;height:12px;line-height:12px;font-size:10px;color:#000;white-space:pre;-webkit-text-stroke:0.15px #000;">il dettaglio dell'infisso o del ponte termico</div>
<div style="left:909px;top:508px;width:315px;height:63px;background:#f0f0f0;border:1px solid #666;"></div>
<div class="t" style="letter-spacing:0.397px;left:936px;top:519px;height:16px;line-height:16px;font-size:12px;color:#000;white-space:pre;">Modifica parete o solaio composto</div>
<div class="t" style="letter-spacing:-0.011px;left:936px;top:537px;height:12px;line-height:12px;font-size:10px;color:#000;white-space:pre;-webkit-text-stroke:0.15px #000;">Permette di definire la parete o il solaio indicandone i</div>
<div class="t" style="letter-spacing:0.043px;left:936px;top:550px;height:12px;line-height:12px;font-size:10px;color:#000;white-space:pre;-webkit-text-stroke:0.15px #000;">componenti principali e secondari</div>
<div style="left:909px;top:574px;width:315px;height:25px;background:#f0f0f0;border:1px solid #666;"></div>
<div class="t" style="letter-spacing:0.409px;left:938.3px;top:579px;height:16px;line-height:16px;font-size:12px;color:#000;white-space:pre;">Sostituisci strutture disperdenti</div>
<svg style="left:1211.0px;top:585.0px;" width="7" height="4" viewBox="0 0 7 4"><path d="M0 0H7L3.5 4Z" fill="#000"/></svg>
<div style="left:909px;top:602px;width:315px;height:25px;background:#f0f0f0;border:1px solid #666;"></div>
<div class="t" style="letter-spacing:0.458px;left:938.3px;top:607px;height:16px;line-height:16px;font-size:12px;color:#000;white-space:pre;">Modifica multipla proprietà elementi</div>
<svg style="left:1211.0px;top:613.0px;" width="7" height="4" viewBox="0 0 7 4"><path d="M0 0H7L3.5 4Z" fill="#000"/></svg>
<div style="left:909px;top:630px;width:315px;height:63px;background:#f0f0f0;border:1px solid #666;"></div>
<div class="t" style="letter-spacing:0.391px;left:936px;top:641px;height:16px;line-height:16px;font-size:12px;color:#000;white-space:pre;">Riallinea archivi dei materiali</div>
<div class="t" style="letter-spacing:-0.113px;left:936px;top:659px;height:12px;line-height:12px;font-size:10px;color:#000;white-space:pre;-webkit-text-stroke:0.15px #000;">Permette di sincronizzare l'elenco dei materiali utilizzati per la</div>
<div class="t" style="letter-spacing:-0.039px;left:936px;top:671px;height:12px;line-height:12px;font-size:10px;color:#000;white-space:pre;-webkit-text-stroke:0.15px #000;">composizione delle stratigrafie con l'archivio di sistema</div>
<div style="left:909px;top:696px;width:179px;height:25px;background:#f0f0f0;border:1px solid #666;"></div>
<div class="t" style="letter-spacing:0.378px;left:935.6px;top:701px;height:16px;line-height:16px;font-size:12px;color:#000;white-space:pre;">Copia struttura in archivio</div>
<div style="left:1091px;top:696px;width:133px;height:25px;background:#f0f0f0;border:1px solid #666;"></div>
<div class="t" style="letter-spacing:0.342px;left:1117.1px;top:701px;height:16px;line-height:16px;font-size:12px;color:#000;white-space:pre;">Verifica condensa</div>
<div style="left:1247px;top:161px;width:20px;height:92px;background:#f0f0f0;border:1px solid #a0a0a0;border-right:none;"></div>
<div style="left:1257.5px;top:187.3px;width:0;height:0;transform:rotate(90deg);transform-origin:0 0;">
<div class="t" style="letter-spacing:0.240px;left:0px;top:-7px;height:15px;line-height:15px;font-size:11px;color:#000;white-space:pre;font-weight:700;">Segnalibro</div>
</div>
<div style="left:1px;top:880px;width:1268px;height:20px;background:#f0f0f0;"></div>
<div style="left:1px;top:882px;width:970px;height:18px;background:#f0f0f0;border-top:1px solid #a0a0a0;border-left:1px solid #a0a0a0;border-right:1px solid #fff;border-bottom:1px solid #fff;"></div>
<div style="left:974px;top:882px;width:51px;height:18px;background:#f0f0f0;border-top:1px solid #a0a0a0;border-left:1px solid #a0a0a0;border-right:1px solid #fff;border-bottom:1px solid #fff;"></div>
<div style="left:1028px;top:882px;width:156px;height:18px;background:#f0f0f0;border-top:1px solid #a0a0a0;border-left:1px solid #a0a0a0;border-right:1px solid #fff;border-bottom:1px solid #fff;"></div>
<div style="left:1187px;top:882px;width:32px;height:18px;background:#f0f0f0;border-top:1px solid #a0a0a0;border-left:1px solid #a0a0a0;border-right:1px solid #fff;border-bottom:1px solid #fff;"></div>
<div style="left:1222px;top:882px;width:30px;height:18px;background:#f0f0f0;border-top:1px solid #a0a0a0;border-left:1px solid #a0a0a0;border-right:1px solid #fff;border-bottom:1px solid #fff;"></div>
<div class="t" style="transform-origin:0 50%;transform:scaleX(0.8326);left:3.7px;top:883px;height:16.5px;line-height:16.5px;font-size:12.5px;color:#000;white-space:pre;">Wizard inserimento impianto</div>
<div class="t" style="letter-spacing:-0.677px;left:978px;top:883px;height:16.5px;line-height:16.5px;font-size:12.5px;color:#000;white-space:pre;">v. 17.01c</div>
<div class="t" style="transform-origin:0 50%;transform:scaleX(0.8096);left:1190.8px;top:883px;height:16.5px;line-height:16.5px;font-size:12.5px;color:#a0a0a0;white-space:pre;">MAIU</div>
<div class="t" style="transform-origin:0 50%;transform:scaleX(0.8395);left:1225.8px;top:883px;height:16.5px;line-height:16.5px;font-size:12.5px;color:#000;white-space:pre;">NUM</div>
<svg style="left:1255px;top:886px;" width="14" height="14" viewBox="0 0 14 14"><path d="M2.5 13.5L13.5 2.5M6.5 13.5L13.5 6.5M10.5 13.5L13.5 10.5" stroke="#fff" stroke-width="1.2" transform="translate(-1,-0.6)"/><path d="M2.5 13.5L13.5 2.5M6.5 13.5L13.5 6.5M10.5 13.5L13.5 10.5" stroke="#a0a0a0" stroke-width="1.1"/></svg>
<svg width="0" height="0" style="left:0;top:0"><defs>
<linearGradient id="gPage" x1="0" y1="0" x2="1" y2="1"><stop offset="0" stop-color="#ffffff"/><stop offset="1" stop-color="#dfe6f5"/></linearGradient>
<linearGradient id="gGreen" x1="0" y1="0" x2="0" y2="1"><stop offset="0" stop-color="#b5dd6a"/><stop offset="1" stop-color="#76b52a"/></linearGradient>
<linearGradient id="gBlueA" x1="0" y1="0" x2="0" y2="1"><stop offset="0" stop-color="#d6e8fa"/><stop offset="1" stop-color="#5f9ddc"/></linearGradient>
<linearGradient id="gRed" x1="0" y1="0" x2="0" y2="1"><stop offset="0" stop-color="#f4562c"/><stop offset="1" stop-color="#d62f0c"/></linearGradient>
<linearGradient id="gMinus" x1="0" y1="0" x2="1" y2="0"><stop offset="0" stop-color="#ff7a3c"/><stop offset="1" stop-color="#e83a08"/></linearGradient>
<linearGradient id="gFolder" x1="0" y1="0" x2="0" y2="1"><stop offset="0" stop-color="#fde3a4"/><stop offset="1" stop-color="#efa83a"/></linearGradient>
<linearGradient id="gPrn" x1="0" y1="0" x2="0" y2="1"><stop offset="0" stop-color="#eef2fa"/><stop offset="1" stop-color="#9fb0d6"/></linearGradient>
<linearGradient id="gWin" x1="0" y1="0.3" x2="1" y2="0.7"><stop offset="0" stop-color="#f4f2ff"/><stop offset="0.45" stop-color="#ffffff"/><stop offset="1" stop-color="#cfcdfb"/></linearGradient>
<linearGradient id="gCyl" x1="0" y1="0" x2="1" y2="0"><stop offset="0" stop-color="#fbe6c2"/><stop offset="0.6" stop-color="#f3bf78"/><stop offset="1" stop-color="#dc9040"/></linearGradient>
<linearGradient id="gNote" x1="0" y1="0" x2="0" y2="1"><stop offset="0" stop-color="#f6b845"/><stop offset="1" stop-color="#fde9a6"/></linearGradient>
<radialGradient id="gStar" cx="0.4" cy="0.35" r="0.7"><stop offset="0" stop-color="#fffbe0"/><stop offset="0.5" stop-color="#fbd240"/><stop offset="1" stop-color="#f2a51c"/></radialGradient>
<radialGradient id="gGlow" cx="0.5" cy="0.5" r="0.5"><stop offset="0" stop-color="#ffe066" stop-opacity="0.9"/><stop offset="1" stop-color="#ffe066" stop-opacity="0"/></radialGradient>
<radialGradient id="gPie" cx="0.35" cy="0.3" r="0.8"><stop offset="0" stop-color="#f4a09a"/><stop offset="1" stop-color="#d0444a"/></radialGradient>
<radialGradient id="gHelm" cx="0.45" cy="0.3" r="0.8"><stop offset="0" stop-color="#fff27a"/><stop offset="0.5" stop-color="#f9d40a"/><stop offset="1" stop-color="#d9a400"/></radialGradient>
<linearGradient id="gPinkBox" x1="0" y1="0" x2="0" y2="1"><stop offset="0" stop-color="#f3a396"/><stop offset="1" stop-color="#e06058"/></linearGradient>
</defs></svg>
<svg style="left:8px;top:10px;" width="16" height="15" viewBox="0 0 16 15"><path d="M2.2 9.4C2 3.8 5.6 0.6 9 0.6C12.6 0.6 15 4 14.8 9.2Z" fill="url(#gHelm)" stroke="#d6a30a" stroke-width="0.5"/><path d="M0.4 10.2C1 8.6 2.4 8.6 4 9.2C7.6 10.6 11.6 10.2 15.4 8.8C16 10 15.2 11 13 11.4C9 12.4 4 12.4 0.8 11.2Z" fill="#f2c40c" stroke="#c99700" stroke-width="0.5"/><path d="M5.6 2.6C7 1.4 9 1.2 10.6 1.8" stroke="#fff8b0" stroke-width="1.1" fill="none" stroke-linecap="round"/><rect x="9.3" y="7.3" width="5.4" height="7.2" fill="#fff" stroke="#b9c6e2" stroke-width="0.6"/><path d="M10.2 9.2H11.4" stroke="#3ea43a" stroke-width="0.9"/><path d="M10.2 10.5H12.2" stroke="#b7cf2a" stroke-width="0.9"/><path d="M10.2 11.8H13" stroke="#f2a81c" stroke-width="0.9"/><path d="M10.2 13.1H13.8" stroke="#e23a2a" stroke-width="0.9"/></svg>
<svg style="left:39px;top:9px;" width="12" height="15" viewBox="0 0 12 15"><rect x="0.5" y="0.5" width="11" height="14" rx="0.8" fill="url(#gPage)" stroke="#7b86c2"/><rect x="2" y="2" width="8" height="11" fill="#e9eef9" opacity="0.7"/></svg>
<svg style="left:60px;top:9px;" width="17" height="17" viewBox="0 0 17 17"><rect x="4.5" y="0.5" width="11.4" height="14" rx="0.8" fill="url(#gPage)" stroke="#7b86c2"/><circle cx="6.4" cy="7" r="7.4" fill="url(#gGlow)"/><path d="M5.20 1.78L7.15 4.74L10.69 4.46L8.48 7.23L9.84 10.51L6.52 9.26L3.82 11.57L3.98 8.03L0.95 6.18L4.37 5.23Z" fill="url(#gStar)" stroke="#dd7514" stroke-width="1" stroke-linejoin="round"/><path d="M9 10.4L14.4 15.6" stroke="#22262e" stroke-width="2.1" stroke-linecap="round"/><path d="M9.2 10.6L14.2 15.4" stroke="#b4bccc" stroke-width="0.7" stroke-dasharray="0.8 0.9"/></svg>
<svg style="left:85px;top:9px;" width="16" height="16" viewBox="0 0 16 16"><path d="M2 0H14L16 2V14L14 16H2L0 14V2Z" fill="#05a6f0"/><text x="8" y="11" font-family="Liberation Sans, sans-serif" font-size="8" font-weight="700" fill="#fff" text-anchor="middle" textLength="13" lengthAdjust="spacingAndGlyphs">SCE</text></svg>
<svg style="left:109px;top:10.5px;" width="16" height="13" viewBox="0 0 16 13"><path d="M0.5 11.8V1.6Q0.5 0.6 1.5 0.6H5.2L6.6 2.4H11.4Q12.2 2.4 12.2 3.4V5.2" fill="#f6cf85" stroke="#c17a22" stroke-linejoin="round"/><path d="M0.6 12L3.4 5.2H15.6L12.4 12Z" fill="url(#gFolder)" stroke="#c17a22" stroke-linejoin="round"/><path d="M4 6.2H14" stroke="#fff2cf" stroke-width="0.8"/></svg>
<svg style="left:134px;top:10px;" width="14" height="14" viewBox="0 0 14 14"><g transform="scale(1.0)"><rect x="0.3" y="0.3" width="13.4" height="13.4" rx="1" fill="#3c4864" stroke="#2a3348" stroke-width="0.6"/><rect x="1.1" y="0.8" width="1" height="12.4" fill="#6e7c9c"/><rect x="11.9" y="0.8" width="1" height="12.4" fill="#6e7c9c"/><rect x="3" y="0.8" width="8" height="6" fill="#f3f5fa"/><rect x="3" y="0.8" width="3.6" height="6" fill="#d7deee"/><rect x="8.6" y="1.6" width="1.6" height="3.2" fill="#1f2638"/><rect x="3" y="8.2" width="8" height="5.4" fill="#fff"/><rect x="3" y="11" width="8" height="1.8" fill="#5b9ddd"/><rect x="3" y="12.8" width="8" height="0.8" fill="#2f6fc0"/></g></svg>
<svg style="left:158px;top:10px;" width="12" height="12" viewBox="0 0 12 12"><g transform="scale(0.8571428571428571)"><rect x="0.3" y="0.3" width="13.4" height="13.4" rx="1" fill="#3c4864" stroke="#2a3348" stroke-width="0.6"/><rect x="1.1" y="0.8" width="1" height="12.4" fill="#6e7c9c"/><rect x="11.9" y="0.8" width="1" height="12.4" fill="#6e7c9c"/><rect x="3" y="0.8" width="8" height="6" fill="#f3f5fa"/><rect x="3" y="0.8" width="3.6" height="6" fill="#d7deee"/><rect x="8.6" y="1.6" width="1.6" height="3.2" fill="#1f2638"/><rect x="3" y="8.2" width="8" height="5.4" fill="#fff"/><rect x="3" y="11" width="8" height="1.8" fill="#5b9ddd"/><rect x="3" y="12.8" width="8" height="0.8" fill="#2f6fc0"/></g></svg>
<svg style="left:164.5px;top:16.5px;" width="9" height="9" viewBox="0 0 9 9"><path d="M2.6 0.4H6.4V3.6H8.7L4.5 8.6L0.3 3.6H2.6Z" fill="#6cbf2c" stroke="#3f8f12" stroke-width="0.7" stroke-linejoin="round"/><path d="M3.3 1.2H5.7V3" stroke="#c4ee8e" stroke-width="0.8" fill="none"/></svg>
<svg style="left:187px;top:9px;" width="15" height="15" viewBox="0 0 15 15"><rect x="0.5" y="5.5" width="14" height="7.5" rx="1.6" fill="url(#gPrn)" stroke="#7b8cc2"/><rect x="2" y="6.4" width="11" height="3" rx="1" fill="#3d4a70"/><rect x="3.5" y="0.5" width="8" height="6.5" fill="#f1f4fb" stroke="#8f9dcc"/><rect x="3.5" y="10.5" width="8" height="4" fill="#fff" stroke="#7b8cc2"/><rect x="4.6" y="11.6" width="5.8" height="2" fill="#5ea3e2"/></svg>
<svg style="left:229px;top:10px;" width="14" height="14" viewBox="0 0 14 14"><rect x="0" y="0" width="14" height="14" rx="1.6" fill="url(#gRed)"/><circle cx="7" cy="7" r="4.3" fill="none" stroke="#fff" stroke-width="1.5"/><rect x="6.2" y="4.6" width="1.6" height="4.8" fill="#fff"/></svg>
<svg style="left:12px;top:69px;" width="10" height="10" viewBox="0 0 10 10"><path d="M3.2 0.5H6.8V3.2H9.5V6.8H6.8V9.5H3.2V6.8H0.5V3.2H3.2Z" fill="#62c662" stroke="#2f8f2f"/></svg>
<svg style="left:12px;top:93px;" width="10" height="10" viewBox="0 0 10 10"><path d="M3.2 0.5H6.8V3.2H9.5V6.8H6.8V9.5H3.2V6.8H0.5V3.2H3.2Z" fill="#f6ee1e" stroke="#d9c800"/></svg>
<svg style="left:12px;top:120px;" width="10" height="4" viewBox="0 0 10 4"><rect x="0.5" y="0.5" width="9" height="3" fill="url(#gMinus)" stroke="#e03408"/></svg>
<svg style="left:91px;top:67px;" width="12" height="14" viewBox="0 0 12 14"><path d="M6 0.6L11.4 9.5H8.5V13.5H3.5V9.5H0.6Z" fill="url(#gBlueA)" stroke="#5a8acb" stroke-linejoin="round"/></svg>
<svg style="left:91px;top:91px;" width="12" height="14" viewBox="0 0 12 14"><path transform="translate(0,14) scale(1,-1)" d="M6 0.6L11.4 9.5H8.5V13.5H3.5V9.5H0.6Z" fill="url(#gBlueA)" stroke="#5a8acb" stroke-linejoin="round"/></svg>
<svg style="left:90px;top:115px;" width="14" height="14" viewBox="0 0 14 14"><rect x="0.5" y="0.5" width="8" height="8" fill="url(#gGreen)" stroke="#5a8a24"/><rect x="5.5" y="5.5" width="8" height="8" fill="url(#gGreen)" stroke="#4f7f1f"/><rect x="1.5" y="1.5" width="6" height="2.5" fill="#fff" opacity="0.35"/><rect x="6.5" y="6.5" width="6" height="2.5" fill="#fff" opacity="0.3"/></svg>
<svg style="left:180px;top:66px;" width="14" height="15" viewBox="0 0 14 15"><path d="M1.6 0.6L9.6 10.8M12.4 0.6L4.4 10.8" stroke="#7f93bd" stroke-width="2.3" stroke-linecap="round"/><path d="M1.9 1.2L9 10.2M12.1 1.2L5 10.2" stroke="#f2f5fb" stroke-width="0.9" stroke-linecap="round"/><circle cx="3.2" cy="12.2" r="2.1" fill="#c4d9f6" stroke="#3f76cf" stroke-width="1.5"/><circle cx="10.8" cy="12.2" r="2.1" fill="#c4d9f6" stroke="#3f76cf" stroke-width="1.5"/></svg>
<svg style="left:181px;top:90px;" width="13" height="15" viewBox="0 0 13 15"><rect x="3.5" y="0.5" width="9" height="11" rx="0.8" fill="url(#gPage)" stroke="#7b86c2"/><rect x="0.5" y="3.5" width="9" height="11" rx="0.8" fill="url(#gPage)" stroke="#7b86c2"/></svg>
<svg style="left:181px;top:114px;" width="13" height="15" viewBox="0 0 13 15"><rect x="0.5" y="1.5" width="9.5" height="11.5" rx="1" fill="#eec07c" stroke="#b9783a"/><rect x="3" y="0.3" width="4.6" height="2.6" rx="0.8" fill="#b9c3dc" stroke="#6e7db0" stroke-width="0.8"/><rect x="4.5" y="5.5" width="8" height="9" rx="0.6" fill="url(#gPage)" stroke="#6a78bd"/></svg>
<svg style="left:249.5px;top:66px;" width="14" height="15" viewBox="0 0 14 15"><path d="M0.6 7.2C0.8 3.4 4.6 1.6 9.2 3L9 0.6L13.6 3.8L9.6 7L9.4 5C6 4 3.4 5 2.6 7.8Z" fill="#84c94a" stroke="#4c9a22" stroke-width="0.6" stroke-linejoin="round"/><path d="M2 6.4C2.6 4 5.6 3 8.6 3.8" stroke="#c8eea0" stroke-width="0.7" fill="none"/><path d="M13.4 7.8C13.2 11.6 9.4 13.4 4.8 12L5 14.4L0.4 11.2L4.4 8L4.6 10C8 11 10.6 10 11.4 7.2Z" fill="#86b8ec" stroke="#4a84c8" stroke-width="0.6" stroke-linejoin="round"/><path d="M12 8.6C11.4 11 8.4 12 5.4 11.2" stroke="#cfe4fa" stroke-width="0.7" fill="none"/></svg>
<svg style="left:250px;top:90px;" width="15" height="15" viewBox="0 0 15 15"><rect x="3.5" y="0.5" width="8" height="9.5" rx="0.8" fill="url(#gPage)" stroke="#7b86c2"/><rect x="0.5" y="3.5" width="8" height="9.5" rx="0.8" fill="url(#gPage)" stroke="#7b86c2"/><rect x="7.5" y="8" width="4" height="3.5" rx="0.7" fill="#f29a84" stroke="#d2563c" stroke-width="0.8"/><rect x="11" y="8.5" width="3.6" height="4" rx="0.7" fill="#f6b660" stroke="#cf7a18" stroke-width="0.8"/><rect x="4.6" y="11" width="4.4" height="3.6" rx="0.7" fill="#7db9f0" stroke="#2f79cf" stroke-width="0.8"/><rect x="9" y="11" width="4.4" height="3.6" rx="0.7" fill="#9dd13c" stroke="#5b9612" stroke-width="0.8"/></svg>
<svg style="left:248.5px;top:115px;" width="16" height="13" viewBox="0 0 16 13"><path d="M0.4 12.8V8.2L2.4 6.8V4.6L4.4 3.2V1.4L6 0.2H9.4V3.2L11.8 3.4V6.8L15.6 7.2V12.8Z" fill="#5b8fd0"/><path d="M4.4 1.4L6 0.2H9.4L8 1.4ZM2.4 4.6L4.4 3.2H8L9.4 3.2L11.8 3.4L10.4 4.6ZM0.4 8.2L2.4 6.8H10.4L11.8 6.8L15.6 7.2L13.6 8.2Z" fill="#9cc0ea"/><path d="M8 1.4L9.4 0.2V3.2L8 4.4ZM10.4 4.6L11.8 3.4V6.8L10.4 8ZM13.6 8.2L15.6 7.2V12.8H13.6Z" fill="#4677ba"/></svg>
<svg style="left:508px;top:66px;" width="18" height="33" viewBox="0 0 18 33"><path d="M2.5 11.5V1.5H16.5V31.5H2.5V21.5" fill="#fff" stroke="#868686"/><path d="M1 13L5 16.5L1 20Z" fill="#8c8c8c"/><rect x="6" y="4" width="5" height="9" fill="#d9603b"/><rect x="6" y="14" width="5" height="15" fill="#4d80bc"/><rect x="12" y="4" width="2" height="1" fill="#6c6c6c"/><rect x="12" y="7" width="2" height="1" fill="#6c6c6c"/><rect x="12" y="10" width="2" height="1" fill="#6c6c6c"/><rect x="12" y="13" width="2" height="1" fill="#6c6c6c"/><rect x="12" y="16" width="2" height="1" fill="#6c6c6c"/><rect x="12" y="19" width="2" height="1" fill="#6c6c6c"/><rect x="12" y="22" width="2" height="1" fill="#6c6c6c"/><rect x="12" y="25" width="2" height="1" fill="#6c6c6c"/><rect x="12" y="28" width="2" height="1" fill="#6c6c6c"/></svg>
<svg style="left:604px;top:66px;" width="32" height="33" viewBox="0 0 32 33"><path d="M6.5 2.5H21.5L27.5 8.5V28.5H6.5Z" fill="url(#gPage)" stroke="#7f92c8" stroke-linejoin="round"/><path d="M20.5 2.8V9.5H27.2" fill="#fff" stroke="#7f92c8" stroke-linejoin="round"/><circle cx="9" cy="11.5" r="11" fill="url(#gGlow)"/><path d="M7.16 4.23L10.31 8.35L15.45 7.57L12.49 11.84L14.82 16.49L9.85 15.00L6.15 18.65L6.03 13.45L1.42 11.07L6.32 9.35Z" fill="url(#gStar)" stroke="#d8842a" stroke-width="1" stroke-linejoin="round"/><path d="M12.6 16L19.2 22.4" stroke="#3c4660" stroke-width="2.6" stroke-linecap="round"/><path d="M13 16.2L19 22" stroke="#dfe6f4" stroke-width="0.9" stroke-dasharray="1.2 1.2"/><rect x="18.5" y="22.5" width="11" height="9" fill="#fff" stroke="#7f92c8"/><rect x="22.4" y="25.4" width="3.2" height="6.2" fill="#f3c27a" stroke="#d06f1c" stroke-width="0.9"/><path d="M16.8 24.2L24 17.6L31.2 24.2" fill="none" stroke="#6fae1e" stroke-width="2.2" stroke-linejoin="miter"/><path d="M17.4 24L24 18L30.6 24" fill="none" stroke="#c9ec8a" stroke-width="0.6" stroke-dasharray="0.9 0.9"/></svg>
<svg style="left:661px;top:66px;" width="17" height="17" viewBox="0 0 17 17"><rect x="4.5" y="0.5" width="11.4" height="14" rx="0.8" fill="url(#gPage)" stroke="#7b86c2"/><circle cx="6.4" cy="7" r="7.4" fill="url(#gGlow)"/><path d="M5.20 1.78L7.15 4.74L10.69 4.46L8.48 7.23L9.84 10.51L6.52 9.26L3.82 11.57L3.98 8.03L0.95 6.18L4.37 5.23Z" fill="url(#gStar)" stroke="#dd7514" stroke-width="1" stroke-linejoin="round"/><path d="M9 10.4L14.4 15.6" stroke="#22262e" stroke-width="2.1" stroke-linecap="round"/><path d="M9.2 10.6L14.2 15.4" stroke="#b4bccc" stroke-width="0.7" stroke-dasharray="0.8 0.9"/></svg>
<svg style="left:661px;top:90px;" width="17" height="17" viewBox="0 0 17 17"><rect x="4.5" y="0.5" width="11.4" height="14" rx="0.8" fill="#f7f7f7" stroke="#dcdcdc"/><path d="M5.20 1.78L7.15 4.74L10.69 4.46L8.48 7.23L9.84 10.51L6.52 9.26L3.82 11.57L3.98 8.03L0.95 6.18L4.37 5.23Z" fill="#fafafa" stroke="#d4d4d4" stroke-width="0.9" stroke-linejoin="round"/><path d="M9 10.4L14.4 15.6" stroke="#cfcfcf" stroke-width="1.8" stroke-linecap="round"/></svg>
<svg style="left:661px;top:114px;" width="17" height="17" viewBox="0 0 17 17"><rect x="4.5" y="0.5" width="11.4" height="14" rx="0.8" fill="url(#gPage)" stroke="#7b86c2"/><circle cx="6.4" cy="7" r="7.4" fill="url(#gGlow)"/><path d="M5.20 1.78L7.15 4.74L10.69 4.46L8.48 7.23L9.84 10.51L6.52 9.26L3.82 11.57L3.98 8.03L0.95 6.18L4.37 5.23Z" fill="url(#gStar)" stroke="#dd7514" stroke-width="1" stroke-linejoin="round"/><path d="M9 10.4L14.4 15.6" stroke="#22262e" stroke-width="2.1" stroke-linecap="round"/><path d="M9.2 10.6L14.2 15.4" stroke="#b4bccc" stroke-width="0.7" stroke-dasharray="0.8 0.9"/></svg>
<svg style="left:871px;top:74px;" width="15" height="16" viewBox="0 0 15 16"><path d="M2.2 1H1.2C0.6 4.4 1.2 7.4 4.4 8.6C7.4 7.4 8 4.4 7.4 1H6.4" fill="none" stroke="#c0504d" stroke-width="1.5" stroke-linejoin="round"/><path d="M4.4 8.6C4.4 13 6.6 15 8.6 15C11 15 12.6 12.6 12.4 7.6" fill="none" stroke="#c0504d" stroke-width="1.5"/><circle cx="12.5" cy="5.6" r="2" fill="#b8c4d8" stroke="#7f92b4" stroke-width="0.8"/><circle cx="2.2" cy="1" r="0.8" fill="#b8c4d8"/><circle cx="6.4" cy="1" r="0.8" fill="#b8c4d8"/></svg>
<svg style="left:869.5px;top:105.5px;" width="16" height="16" viewBox="0 0 16 16"><circle cx="8" cy="8" r="7.3" fill="url(#gPie)" stroke="#c8454c" stroke-width="0.8"/><path d="M8 8L11.8 1.8A7.3 7.3 0 0 1 14.2 11.8Z" fill="#9cc6ee" stroke="#5f95d2" stroke-width="0.5"/><path d="M8 8L14.2 11.8A7.3 7.3 0 0 1 8 15.3Z" fill="#f7c27e" stroke="#d88a30" stroke-width="0.5"/></svg>
<svg style="left:1051px;top:66px;" width="32" height="32" viewBox="0 0 32 32"><rect x="1.5" y="10.5" width="29" height="17" rx="3.5" fill="url(#gPrn)" stroke="#9aa9cf"/><rect x="5" y="12.5" width="22" height="6" rx="2.5" fill="#48567a"/><rect x="5" y="12.5" width="22" height="2.5" rx="1.2" fill="#63729a"/><rect x="7.5" y="1.5" width="17" height="12" fill="#fff" stroke="#a4b2d6"/><rect x="9" y="3" width="14" height="10" fill="#e9edf8"/><rect x="7" y="23" width="18" height="7.5" fill="#fff" stroke="#a4b2d6"/><rect x="8.6" y="24.5" width="14.8" height="5" fill="#5ea3e2"/></svg>
<svg style="left:1100px;top:67px;" width="16" height="14" viewBox="0 0 16 14"><rect x="0.5" y="0.5" width="11" height="13" rx="0.8" fill="#fafafa" stroke="#dedede"/><rect x="2" y="5" width="13.4" height="7" rx="0.8" fill="#d6d6d6"/><text x="8.7" y="11" font-family="Liberation Sans, sans-serif" font-size="7" font-weight="700" fill="#fff" text-anchor="middle" textLength="11.8" lengthAdjust="spacingAndGlyphs">PDF</text></svg>
<svg style="left:1100px;top:91px;" width="16" height="14" viewBox="0 0 16 14"><rect x="0.5" y="0.5" width="11" height="13" rx="0.8" fill="#fafafa" stroke="#dedede"/><rect x="2" y="5" width="13.4" height="7" rx="0.8" fill="#d6d6d6"/><text x="8.7" y="11" font-family="Liberation Sans, sans-serif" font-size="7" font-weight="700" fill="#fff" text-anchor="middle" textLength="11.8" lengthAdjust="spacingAndGlyphs">DOC</text></svg>
<svg style="left:1100px;top:115px;" width="16" height="14" viewBox="0 0 16 14"><rect x="0.5" y="0.5" width="11" height="13" rx="0.8" fill="#fafafa" stroke="#dedede"/><rect x="2" y="5" width="13.4" height="7" rx="0.8" fill="#d6d6d6"/><text x="8.7" y="11" font-family="Liberation Sans, sans-serif" font-size="7" font-weight="700" fill="#fff" text-anchor="middle" textLength="11.8" lengthAdjust="spacingAndGlyphs">XLS</text></svg>
<svg style="left:1133px;top:75px;" width="16" height="15" viewBox="0 0 16 15"><text x="0.8" y="6.8" font-family="Liberation Serif, serif" font-size="9" font-weight="700" fill="#c00000" textLength="6.4" lengthAdjust="spacingAndGlyphs">Σ</text><rect x="4" y="8.3" width="3" height="5.7" fill="#d00000"/><rect x="8" y="5.3" width="3" height="8.7" fill="#3f6fc0"/><rect x="12" y="2" width="3" height="12" fill="#f07800"/></svg>
<svg style="left:1133px;top:106px;" width="16" height="16" viewBox="0 0 16 16"><rect x="0.5" y="0.5" width="15" height="15" rx="1" fill="#fff" stroke="#7b86c2"/><rect x="2" y="2" width="12" height="12" fill="#f1f5fb"/><path d="M2 8.5C5 11.4 9.5 6 13.5 2.2V14H2Z" fill="#a6cdee" stroke="#6ea6da" stroke-width="0.6"/><path d="M2 11.4C5.5 12.4 10 10.4 13.5 8.2V13.5H2Z" fill="#f7c77e" stroke="#b8703a" stroke-width="0.7"/></svg>
<svg style="left:1176px;top:70px;" width="30" height="26" viewBox="0 0 30 26"><rect x="0.8" y="0.8" width="28.4" height="24.4" rx="1.8" fill="url(#gWin)" stroke="#1e90ff" stroke-width="1.4"/><path d="M1.2 2.4Q1.2 1.2 2.4 1.2H27.6Q28.8 1.2 28.8 2.4V5.2H1.2Z" fill="#1e8df2"/><rect x="2" y="1.4" width="26" height="0.9" fill="#7cc0ff" opacity="0.8"/></svg>
<svg style="left:19px;top:199px;" width="16" height="16" viewBox="0 0 16 16"><rect x="1.5" y="0.5" width="10.5" height="12" rx="0.8" fill="url(#gPage)" stroke="#7b86c2"/><path d="M6.4 13.2L13 6.6L15.2 8.8L8.6 15.4Z" fill="#f0b545" stroke="#b97a1c" stroke-width="0.7"/><path d="M7.4 13.4L13.4 7.4" stroke="#fde6a8" stroke-width="0.9"/><path d="M6.4 13.2L8.6 15.4L5.4 16.2Z" fill="#f3d9b0"/><path d="M5.2 16.3L6.9 15.9L5.7 14.7Z" fill="#222"/></svg>
<svg style="left:17px;top:222px;" width="17" height="17" viewBox="0 0 17 17"><path d="M5.6 11.4L14.4 2.6" stroke="#9a9a9a" stroke-width="3.4" stroke-linecap="round"/><path d="M5.6 11.4L14.4 2.6" stroke="#f7f7f7" stroke-width="2.2" stroke-linecap="round"/><circle cx="4.4" cy="12.6" r="3" fill="#f4f4f4" stroke="#9a9a9a" stroke-width="0.8"/><circle cx="4.4" cy="12.6" r="1.7" fill="#e0142c"/><path d="M5.2 11.8L13.2 3.8" stroke="#e0142c" stroke-width="1" stroke-linecap="round"/><path d="M1.4 1.2Q0.2 2.6 1.4 4T1.4 6.8M4 0.8Q2.8 2.2 4 3.6T4 6.4M6.6 0.4Q5.4 1.8 6.6 3.2T6.6 6" stroke="#ec4a5e" stroke-width="0.8" fill="none"/></svg>
<svg style="left:19px;top:245px;" width="16" height="17" viewBox="0 0 16 17"><rect x="0.5" y="0.5" width="12.5" height="13" fill="#f3f5fb" stroke="#7b86c2"/><path d="M7.6 7.6L13 13.6" stroke="#5f6f90" stroke-width="4" stroke-linecap="round"/><path d="M7.6 7.6L13 13.6" stroke="#c6d0e4" stroke-width="2.3" stroke-linecap="round"/><path d="M12.2 12.2L13.4 13.5" stroke="#eef2fa" stroke-width="1" stroke-linecap="round"/><circle cx="6" cy="5.8" r="3.5" fill="#b4c1da" stroke="#5f6f90" stroke-width="0.9"/><path d="M3.5 1.2L6.7 4.4L4.7 6.4L1.5 3.2Z" fill="#f3f5fb"/><path d="M4.2 2L6.7 4.4L4.7 6.4L2.2 4" fill="none" stroke="#5f6f90" stroke-width="0.8" stroke-linejoin="round"/></svg>
<svg style="left:18px;top:268.5px;" width="16" height="14" viewBox="0 0 16 14"><path d="M0.3900000000000001 9.64C0.3900000000000001 5.27 7.609999999999999 5.27 7.609999999999999 9.64Z" fill="#ea9838" stroke="#b9640f" stroke-width="0.6"/><circle cx="4" cy="2.8" r="1.9" fill="#f7c993" stroke="#b9640f" stroke-width="0.6"/><path d="M2.1 2.8A1.9 1.9 0 0 1 5.9 2.8Q4 1.8499999999999999 2.1 2.8Z" fill="#a8540c"/><path d="M8.39 9.64C8.39 5.27 15.61 5.27 15.61 9.64Z" fill="#ea9838" stroke="#b9640f" stroke-width="0.6"/><circle cx="12" cy="2.8" r="1.9" fill="#f7c993" stroke="#b9640f" stroke-width="0.6"/><path d="M10.1 2.8A1.9 1.9 0 0 1 13.9 2.8Q12 1.8499999999999999 10.1 2.8Z" fill="#a8540c"/><path d="M3.7439999999999998 13.264000000000003C3.7439999999999998 8.112 12.256 8.112 12.256 13.264000000000003Z" fill="#f2a94e" stroke="#b9640f" stroke-width="0.6"/><circle cx="8" cy="5.2" r="2.24" fill="#f7c993" stroke="#b9640f" stroke-width="0.6"/><path d="M5.76 5.2A2.24 2.24 0 0 1 10.24 5.2Q8 4.08 5.76 5.2Z" fill="#a8540c"/></svg>
<svg style="left:18px;top:705px;" width="15" height="15" viewBox="0 0 15 15"><rect x="0.5" y="0.5" width="14" height="14" rx="1" fill="#fff" stroke="#7b86c2"/><rect x="2" y="2" width="3" height="3" fill="#d9523f"/><rect x="2" y="6" width="3" height="3" fill="#3f86d8"/><rect x="2" y="10" width="3" height="3" fill="#e0861c"/><rect x="7" y="3" width="5.5" height="1" fill="#3d4d7c"/><rect x="7" y="7" width="5.5" height="1" fill="#3d4d7c"/><rect x="7" y="11" width="5.5" height="1" fill="#3d4d7c"/></svg>
<svg style="left:18px;top:728px;" width="15" height="15" viewBox="0 0 15 15"><rect x="0.5" y="0.5" width="14" height="14" rx="1" fill="#fff" stroke="#7b86c2"/><rect x="2" y="2" width="11" height="3" fill="#5c9fe6"/><rect x="2" y="2" width="11" height="1" fill="#9cc9f5"/><rect x="2" y="7" width="3" height="3" fill="#6d7cba"/><rect x="3" y="8" width="1" height="1" fill="#fff"/><rect x="6" y="7" width="3" height="3" fill="#6d7cba"/><rect x="7" y="8" width="1" height="1" fill="#fff"/><rect x="10" y="7" width="3" height="3" fill="#e6962c"/><rect x="11" y="8" width="1" height="1" fill="#fff"/><rect x="2" y="11" width="3" height="3" fill="#6d7cba"/><rect x="3" y="12" width="1" height="1" fill="#fff"/><rect x="6" y="11" width="3" height="3" fill="#6d7cba"/><rect x="7" y="12" width="1" height="1" fill="#fff"/><rect x="10" y="11" width="3" height="3" fill="#6d7cba"/><rect x="11" y="12" width="1" height="1" fill="#fff"/></svg>
<svg style="left:18px;top:751px;" width="16" height="16" viewBox="0 0 16 16"><rect x="0.5" y="0.5" width="15" height="15" rx="1" fill="#fff" stroke="#7b86c2"/><rect x="2" y="2" width="12" height="12" fill="#f3f5fb"/><rect x="2.4" y="8.4" width="2.6" height="5" rx="1" fill="#62a2e2" stroke="#2e6fc4" stroke-width="0.6"/><rect x="6.4" y="5.4" width="2.6" height="8" rx="1" fill="#f4b660" stroke="#c9761a" stroke-width="0.6"/><rect x="10.4" y="3.4" width="2.6" height="10" rx="1" fill="#ee6a58" stroke="#c9302a" stroke-width="0.6"/></svg>
<svg style="left:20px;top:848px;" width="12" height="15" viewBox="0 0 12 15"><rect x="0.5" y="2.5" width="11" height="12" fill="#fff" stroke="#808080"/><rect x="2" y="1" width="8" height="3" rx="0.6" fill="#4f81bd"/><rect x="5" y="0" width="2" height="1.4" fill="#4f81bd"/><rect x="2" y="6" width="8" height="1" fill="#c4c4c4"/><rect x="2" y="8" width="8" height="1" fill="#c4c4c4"/><rect x="2" y="10" width="4" height="1" fill="#c4c4c4"/></svg>
<svg style="left:26px;top:325.5px;" width="16" height="16" viewBox="0 0 16 16"><circle cx="7.6" cy="8" r="7" fill="#fff" stroke="#6276c6" stroke-width="1"/><path d="M3.6 13A6.4 6.4 0 0 0 11.6 13Z" fill="#e6ecf8"/><path d="M3.6 11.4A5 5 0 0 1 9.4 3.2" fill="none" stroke="#5aa8ee" stroke-width="2"/><path d="M12.2 5.6A5 5 0 0 1 11.6 11.2" fill="none" stroke="#e0402e" stroke-width="2"/><path d="M7.4 8L12.4 3.2" stroke="#1f2748" stroke-width="1.1" stroke-linecap="round"/><circle cx="7.4" cy="8" r="1.6" fill="#1f2748"/></svg>
<svg style="left:45.5px;top:344px;" width="17" height="17" viewBox="0 0 17 17"><path d="M1 2.6V10.6C1 12.6 11 12.6 11 10.6V2.6Z" fill="url(#gCyl)" stroke="#c47a2c" stroke-width="0.8"/><ellipse cx="6" cy="2.6" rx="5" ry="1.9" fill="#fdf3e0" stroke="#c47a2c" stroke-width="0.8"/><path d="M15.92 12.44L14.24 13.35L14.06 15.25L12.23 14.70L10.76 15.92L9.85 14.24L7.95 14.06L8.50 12.23L7.28 10.76L8.96 9.85L9.14 7.95L10.97 8.50L12.44 7.28L13.35 8.96L15.25 9.14L14.70 10.97Z" fill="#6176ae" stroke="#6176ae" stroke-width="1.1" stroke-linejoin="round"/><circle cx="11.6" cy="11.6" r="2.46" fill="#f2f5fb"/><circle cx="11.6" cy="11.6" r="0.97" fill="#6176ae"/></svg>
<svg style="left:45.5px;top:362px;" width="17" height="17" viewBox="0 0 17 17"><path d="M1 2.6V10.6C1 12.6 11 12.6 11 10.6V2.6Z" fill="url(#gCyl)" stroke="#c47a2c" stroke-width="0.8"/><ellipse cx="6" cy="2.6" rx="5" ry="1.9" fill="#fdf3e0" stroke="#c47a2c" stroke-width="0.8"/><path d="M15.92 12.44L14.24 13.35L14.06 15.25L12.23 14.70L10.76 15.92L9.85 14.24L7.95 14.06L8.50 12.23L7.28 10.76L8.96 9.85L9.14 7.95L10.97 8.50L12.44 7.28L13.35 8.96L15.25 9.14L14.70 10.97Z" fill="#6176ae" stroke="#6176ae" stroke-width="1.1" stroke-linejoin="round"/><circle cx="11.6" cy="11.6" r="2.46" fill="#f2f5fb"/><circle cx="11.6" cy="11.6" r="0.97" fill="#6176ae"/></svg>
<svg style="left:45px;top:379px;" width="17" height="18" viewBox="0 0 17 18"><rect x="0.2" y="1" width="8.6" height="8.6" rx="0.8" fill="#ecdc3c"/><rect x="1" y="1.6" width="7" height="3" fill="#f6ec7a" opacity="0.8"/><path d="M10 15L12.2 17.4M13.6 11.4L16 14.2M12 13.4L14 15.8" stroke="#9a9ea8" stroke-width="1.1" stroke-linecap="round"/><path d="M4.4 5.2L11.6 6.4L15 9.8L9.2 16L5.2 12.2Z" fill="#1e1e22" stroke="#1e1e22" stroke-width="0.8" stroke-linejoin="round"/><path d="M6.2 6.6L11.2 7.4L13.4 9.6" stroke="#5c5c66" stroke-width="0.8" fill="none"/></svg>
<svg style="left:25px;top:397px;" width="18" height="16" viewBox="0 0 18 16"><rect x="3.7" y="2.5" width="11" height="13" fill="#eef3fc" stroke="#6e8ad0"/><path d="M3 8.4L9 2.6L15 8.4V2H3Z" fill="#fff"/><path d="M11.6 2.5H14.7V6" fill="none" stroke="#6e8ad0"/><rect x="7.6" y="9.4" width="3" height="6.2" fill="#f6c074" stroke="#cc641a" stroke-width="1"/><path d="M1.4 8.6L9 1.6L16.6 8.6" fill="none" stroke="#62aa1e" stroke-width="2.1"/><path d="M2.2 8.2L9 2L15.8 8.2" fill="none" stroke="#d6f2a0" stroke-width="0.7" stroke-dasharray="0.9 0.9"/></svg>
<svg style="left:226px;top:166px;" width="14" height="15" viewBox="0 0 14 15"><rect x="0.6" y="2.6" width="12" height="11.8" fill="url(#gNote)" stroke="#d68f3a"/><rect x="1.6" y="11" width="10" height="2.4" fill="#fff4c8" opacity="0.8"/><circle cx="7.2" cy="3.8" r="2.8" fill="#3b7bd2"/><circle cx="6.4" cy="3" r="1" fill="#a9d0f7"/></svg>
<svg style="left:1228px;top:163px;shape-rendering:crispEdges;" width="8" height="9" viewBox="0 0 8 9"><path d="M2 0.5H7M2.5 0.5V5M5.5 0.5V5M6.5 0.5V5M0.5 5.5H8M4.5 5.5V9" stroke="#000" stroke-width="1" fill="none"/></svg>
<svg style="left:1251px;top:166px;" width="12" height="14" viewBox="0 0 12 14"><rect x="0.5" y="0.5" width="11" height="13" fill="#eef3fc" stroke="#7b9bd8"/><path d="M3 0.5H6.6V6.4L4.8 5L3 6.4Z" fill="#c8202c"/><path d="M2.6 8.5H9.4M2.6 10.5H9.4" stroke="#7ba4de" stroke-width="0.9"/></svg>
<svg style="left:918px;top:217px;" width="16" height="16" viewBox="0 0 16 16"><circle cx="7.6" cy="8" r="7" fill="#fff" stroke="#6276c6" stroke-width="1"/><path d="M3.6 13A6.4 6.4 0 0 0 11.6 13Z" fill="#e6ecf8"/><path d="M3.6 11.4A5 5 0 0 1 9.4 3.2" fill="none" stroke="#5aa8ee" stroke-width="2"/><path d="M12.2 5.6A5 5 0 0 1 11.6 11.2" fill="none" stroke="#e0402e" stroke-width="2"/><path d="M7.4 8L12.4 3.2" stroke="#1f2748" stroke-width="1.1" stroke-linecap="round"/><circle cx="7.4" cy="8" r="1.6" fill="#1f2748"/></svg>
<svg style="left:928px;top:267px;" width="16" height="17" viewBox="0 0 16 17"><rect x="0.5" y="0.5" width="12.5" height="13" fill="#f3f5fb" stroke="#7b86c2"/><path d="M7.6 7.6L13 13.6" stroke="#5f6f90" stroke-width="4" stroke-linecap="round"/><path d="M7.6 7.6L13 13.6" stroke="#c6d0e4" stroke-width="2.3" stroke-linecap="round"/><path d="M12.2 12.2L13.4 13.5" stroke="#eef2fa" stroke-width="1" stroke-linecap="round"/><circle cx="6" cy="5.8" r="3.5" fill="#b4c1da" stroke="#5f6f90" stroke-width="0.9"/><path d="M3.5 1.2L6.7 4.4L4.7 6.4L1.5 3.2Z" fill="#f3f5fb"/><path d="M4.2 2L6.7 4.4L4.7 6.4L2.2 4" fill="none" stroke="#5f6f90" stroke-width="0.8" stroke-linejoin="round"/></svg>
<svg style="left:1092px;top:273px;" width="10" height="4" viewBox="0 0 10 4"><rect x="0.5" y="0.5" width="9" height="3" fill="url(#gMinus)" stroke="#e03408"/></svg>
<svg style="left:917px;top:311px;" width="15" height="11" viewBox="0 0 15 11"><path d="M0.6 3.8L6.6 0.8L9.4 1.4L13.4 4L12.6 6.4L8.4 7.6L5.6 9L3.6 7.2Z" fill="#7a7a7a" stroke="#5a5a5a" stroke-width="0.6" stroke-linejoin="round"/><path d="M1.6 3.8L6.8 1.6L9.2 2.2" stroke="#c8c8c8" stroke-width="0.8" fill="none"/><circle cx="6.4" cy="7.2" r="2.2" fill="#b4d8fa" stroke="#606870" stroke-width="0.8"/><circle cx="11.6" cy="6.2" r="2.2" fill="#b4d8fa" stroke="#606870" stroke-width="0.8"/><circle cx="5.9" cy="6.7" r="0.8" fill="#fff"/><circle cx="11.1" cy="5.7" r="0.8" fill="#fff"/></svg>
<svg style="left:920px;top:358px;" width="14" height="14" viewBox="0 0 14 14"><rect x="0.5" y="0.5" width="8" height="8" fill="url(#gGreen)" stroke="#5a8a24"/><rect x="5.5" y="5.5" width="8" height="8" fill="url(#gGreen)" stroke="#4f7f1f"/><rect x="1.5" y="1.5" width="6" height="2.5" fill="#fff" opacity="0.35"/><rect x="6.5" y="6.5" width="6" height="2.5" fill="#fff" opacity="0.3"/></svg>
<svg style="left:1081px;top:363px;" width="10" height="4" viewBox="0 0 10 4"><rect x="0.5" y="0.5" width="9" height="3" fill="url(#gMinus)" stroke="#e03408"/></svg>
<svg style="left:921px;top:421.5px;" width="10" height="10" viewBox="0 0 10 10"><path d="M3.2 0.5H6.8V3.2H9.5V6.8H6.8V9.5H3.2V6.8H0.5V3.2H3.2Z" fill="#62c662" stroke="#2f8f2f"/></svg>
<svg style="left:1019px;top:424px;" width="10" height="4" viewBox="0 0 10 4"><rect x="0.5" y="0.5" width="9" height="3" fill="url(#gMinus)" stroke="#e03408"/></svg>
<svg style="left:1045px;top:419px;" width="14" height="14" viewBox="0 0 14 14"><rect x="0.5" y="0.5" width="8" height="8" fill="url(#gGreen)" stroke="#5a8a24"/><rect x="5.5" y="5.5" width="8" height="8" fill="url(#gGreen)" stroke="#4f7f1f"/><rect x="1.5" y="1.5" width="6" height="2.5" fill="#fff" opacity="0.35"/><rect x="6.5" y="6.5" width="6" height="2.5" fill="#fff" opacity="0.3"/></svg>
<svg style="left:1074px;top:418px;" width="13" height="15" viewBox="0 0 13 15"><rect x="3.5" y="0.5" width="9" height="11" rx="0.8" fill="url(#gPage)" stroke="#7b86c2"/><rect x="0.5" y="3.5" width="9" height="11" rx="0.8" fill="url(#gPage)" stroke="#7b86c2"/></svg>
<svg style="left:1102px;top:418px;" width="13" height="15" viewBox="0 0 13 15"><rect x="0.5" y="1.5" width="9.5" height="11.5" rx="1" fill="#eec07c" stroke="#b9783a"/><rect x="3" y="0.3" width="4.6" height="2.6" rx="0.8" fill="#b9c3dc" stroke="#6e7db0" stroke-width="0.8"/><rect x="4.5" y="5.5" width="8" height="9" rx="0.6" fill="url(#gPage)" stroke="#6a78bd"/></svg>
<svg style="left:1129px;top:419px;" width="16" height="14" viewBox="0 0 16 14"><rect x="0.5" y="0.5" width="11" height="13" rx="0.8" fill="url(#gPage)" stroke="#7b86c2"/><rect x="2" y="5" width="13.4" height="7" rx="0.8" fill="#c8202c"/><text x="8.7" y="11" font-family="Liberation Sans, sans-serif" font-size="7" font-weight="700" fill="#fff" text-anchor="middle" textLength="11.8" lengthAdjust="spacingAndGlyphs">PDF</text></svg>
<svg style="left:1157px;top:419px;" width="16" height="14" viewBox="0 0 16 14"><rect x="0.5" y="0.5" width="11" height="13" rx="0.8" fill="url(#gPage)" stroke="#7b86c2"/><rect x="2" y="5" width="13.4" height="7" rx="0.8" fill="#2a6ab8"/><text x="8.7" y="11" font-family="Liberation Sans, sans-serif" font-size="7" font-weight="700" fill="#fff" text-anchor="middle" textLength="11.8" lengthAdjust="spacingAndGlyphs">DOC</text></svg>
<svg style="left:917px;top:452px;" width="16" height="17" viewBox="0 0 16 17"><rect x="0.5" y="0.5" width="12.5" height="13" fill="#f3f5fb" stroke="#7b86c2"/><path d="M7.6 7.6L13 13.6" stroke="#5f6f90" stroke-width="4" stroke-linecap="round"/><path d="M7.6 7.6L13 13.6" stroke="#c6d0e4" stroke-width="2.3" stroke-linecap="round"/><path d="M12.2 12.2L13.4 13.5" stroke="#eef2fa" stroke-width="1" stroke-linecap="round"/><circle cx="6" cy="5.8" r="3.5" fill="#b4c1da" stroke="#5f6f90" stroke-width="0.9"/><path d="M3.5 1.2L6.7 4.4L4.7 6.4L1.5 3.2Z" fill="#f3f5fb"/><path d="M4.2 2L6.7 4.4L4.7 6.4L2.2 4" fill="none" stroke="#5f6f90" stroke-width="0.8" stroke-linejoin="round"/></svg>
<svg style="left:917px;top:518px;" width="16" height="17" viewBox="0 0 16 17"><rect x="0.5" y="0.5" width="12.5" height="13" fill="#f3f5fb" stroke="#7b86c2"/><path d="M7.6 7.6L13 13.6" stroke="#5f6f90" stroke-width="4" stroke-linecap="round"/><path d="M7.6 7.6L13 13.6" stroke="#c6d0e4" stroke-width="2.3" stroke-linecap="round"/><path d="M12.2 12.2L13.4 13.5" stroke="#eef2fa" stroke-width="1" stroke-linecap="round"/><circle cx="6" cy="5.8" r="3.5" fill="#b4c1da" stroke="#5f6f90" stroke-width="0.9"/><path d="M3.5 1.2L6.7 4.4L4.7 6.4L1.5 3.2Z" fill="#f3f5fb"/><path d="M4.2 2L6.7 4.4L4.7 6.4L2.2 4" fill="none" stroke="#5f6f90" stroke-width="0.8" stroke-linejoin="round"/></svg>
<svg style="left:918.5px;top:578px;" width="14" height="15" viewBox="0 0 14 15"><path d="M0.6 7.2C0.8 3.4 4.6 1.6 9.2 3L9 0.6L13.6 3.8L9.6 7L9.4 5C6 4 3.4 5 2.6 7.8Z" fill="#84c94a" stroke="#4c9a22" stroke-width="0.6" stroke-linejoin="round"/><path d="M2 6.4C2.6 4 5.6 3 8.6 3.8" stroke="#c8eea0" stroke-width="0.7" fill="none"/><path d="M13.4 7.8C13.2 11.6 9.4 13.4 4.8 12L5 14.4L0.4 11.2L4.4 8L4.6 10C8 11 10.6 10 11.4 7.2Z" fill="#86b8ec" stroke="#4a84c8" stroke-width="0.6" stroke-linejoin="round"/><path d="M12 8.6C11.4 11 8.4 12 5.4 11.2" stroke="#cfe4fa" stroke-width="0.7" fill="none"/></svg>
<svg style="left:917px;top:606px;" width="18" height="15" viewBox="0 0 18 15"><path d="M6.4 4.6V6.6H3.6V8.4" fill="none" stroke="#6a7690" stroke-width="0.9"/><rect x="4.2" y="0.5" width="4.6" height="4.4" rx="0.5" fill="#6aaaf0" stroke="#3b7dd0" stroke-width="0.7"/><rect x="5" y="1.2" width="3" height="1.4" fill="#b6d8fb"/><rect x="1" y="8.2" width="5.8" height="3.6" rx="0.6" fill="#8cc628" stroke="#5a9410" stroke-width="0.7"/><rect x="2" y="9" width="3.8" height="1" fill="#d0ef8c"/><path d="M16.92 10.04L15.24 10.95L15.06 12.85L13.23 12.30L11.76 13.52L10.85 11.84L8.95 11.66L9.50 9.83L8.28 8.36L9.96 7.45L10.14 5.55L11.97 6.10L13.44 4.88L14.35 6.56L16.25 6.74L15.70 8.57Z" fill="#505f8a" stroke="#505f8a" stroke-width="1.1" stroke-linejoin="round"/><circle cx="12.6" cy="9.2" r="2.46" fill="#f2f5fb"/><circle cx="12.6" cy="9.2" r="0.97" fill="#505f8a"/></svg>
<svg style="left:916px;top:642px;" width="16" height="13" viewBox="0 0 16 13"><rect x="0.5" y="0.5" width="15" height="12" fill="#fff" stroke="#6c8acc"/><rect x="1" y="1" width="14" height="3.4" fill="#86b8ea"/><rect x="1" y="1" width="14" height="1.2" fill="#a9cff3"/><path d="M5.5 0.5V12.5M10.5 0.5V12.5M0.5 4.5H15.5M0.5 8.5H15.5" stroke="#8aa2da" stroke-width="1"/></svg>
<svg style="left:916px;top:700px;" width="15" height="16" viewBox="0 0 15 16"><rect x="0.5" y="0.5" width="11" height="13" rx="0.8" fill="url(#gPinkBox)" stroke="#d2525c"/><rect x="1.4" y="1.3" width="9.2" height="0.9" fill="#fff"/><rect x="1.2" y="3" width="9.6" height="0.7" fill="#f9c9c2"/><path d="M5.4 8.6L9.6 6.6L13.8 8.4V13L9.6 15.6L5.4 13Z" fill="#f6c566" stroke="#c47a20" stroke-width="0.7" stroke-linejoin="round"/><path d="M9.6 10.4L13.8 8.4V13L9.6 15.6Z" fill="#d48a2c"/><path d="M5.4 8.6L9.6 6.6L13.8 8.4L9.6 10.4Z" fill="#fdebbd"/><path d="M9.6 10.4V15.4" stroke="#fff6dc" stroke-width="0.8"/></svg>
<svg style="left:1097px;top:700px;" width="16" height="16" viewBox="0 0 16 16"><rect x="0.5" y="0.5" width="15" height="15" rx="1.2" fill="#fff" stroke="#7b86c2"/><rect x="2" y="2" width="12" height="12" fill="#eef2fa"/><path d="M3 6L13 9.6" stroke="#d0544c" stroke-width="1.2"/><path d="M3 12.6L12.6 3" stroke="#1f4fb0" stroke-width="1.2"/></svg>
<svg style="left:1132px;top:11px;" width="13" height="10" viewBox="0 0 13 10"><rect x="0.5" y="0.5" width="12" height="9" fill="none" stroke="#6e6e6e"/><path d="M0.5 2.5H12.5" stroke="#6e6e6e"/><path d="M6.5 9V4.4M4.2 6.6L6.5 4.2L8.8 6.6" fill="none" stroke="#6e6e6e" stroke-width="1.1"/></svg>
<div style="left:1170px;top:18px;width:9px;height:2px;background:#6e6e6e;"></div>
<svg style="left:1205px;top:11px;" width="10" height="10" viewBox="0 0 10 10"><rect x="0.5" y="0.5" width="9" height="9" fill="none" stroke="#6e6e6e"/><rect x="0" y="0" width="10" height="3" fill="#6e6e6e"/></svg>
<svg style="left:1241px;top:11px;" width="10" height="10" viewBox="0 0 10 10"><path d="M0.8 0.8L9.2 9.2M9.2 0.8L0.8 9.2" stroke="#6e6e6e" stroke-width="2.1"/></svg>
<div style="left:1204px;top:47px;width:9px;height:2px;background:#6e6e6e;"></div>
<svg style="left:1227px;top:40px;" width="10" height="10" viewBox="0 0 10 10"><path d="M2.5 2.5V0.5H9.5V6.5H8" fill="none" stroke="#6e6e6e"/><rect x="2" y="0" width="8" height="2" fill="#6e6e6e"/><rect x="0.5" y="3.5" width="7" height="6" fill="#fff" stroke="#6e6e6e"/><rect x="0" y="3" width="8" height="2" fill="#6e6e6e"/></svg>
<svg style="left:1251px;top:40px;" width="10" height="10" viewBox="0 0 10 10"><path d="M0.8 0.8L9.2 9.2M9.2 0.8L0.8 9.2" stroke="#6e6e6e" stroke-width="2.1"/></svg>
<div style="left:0px;top:0px;width:1270px;height:901px;border-radius:8px 8px 6px 6px;box-shadow:inset 0 0 0 1px #b0b0b0;pointer-events:none;"></div>
</div></body></html>
